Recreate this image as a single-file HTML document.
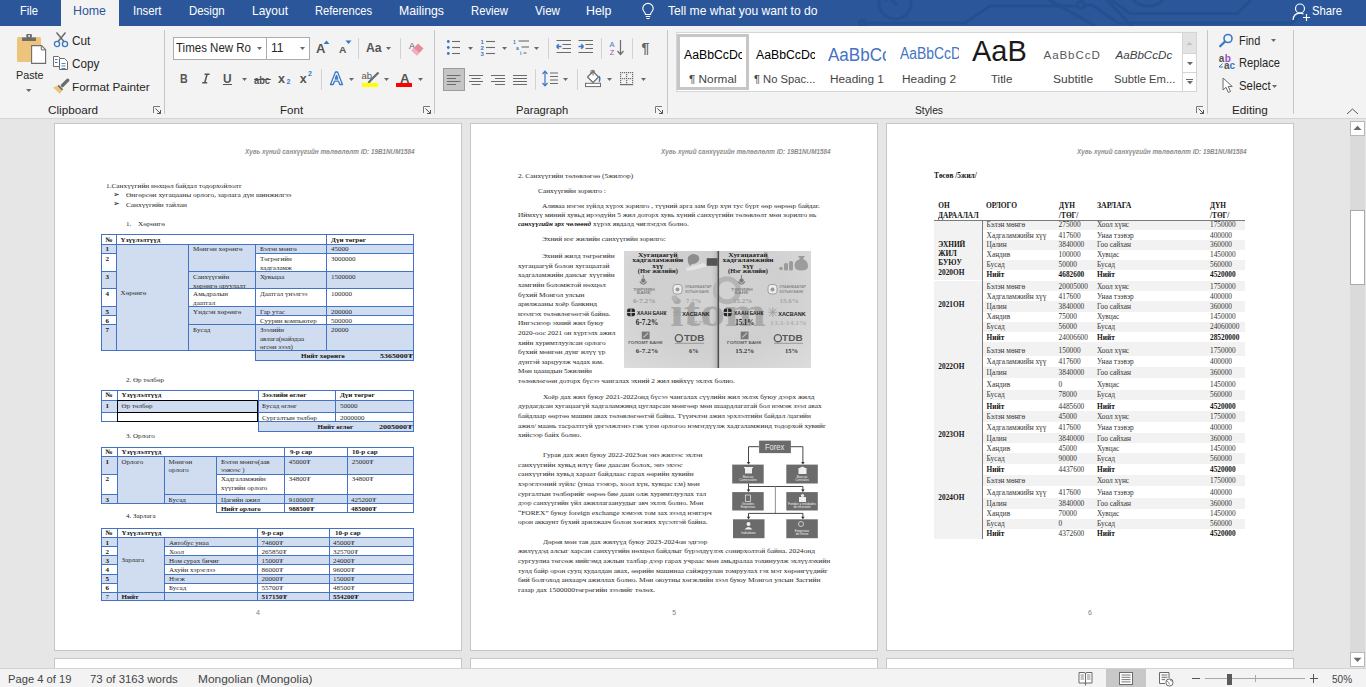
<!DOCTYPE html><html><head><meta charset="utf-8"><title>Word</title><style>
html,body{margin:0;padding:0}
body{width:1366px;height:687px;overflow:hidden;position:relative;background:#e6e6e6;font-family:'Liberation Sans',sans-serif}
.t{position:absolute;line-height:0;white-space:nowrap}
.b{position:absolute;box-sizing:border-box}
svg{position:absolute;overflow:visible}
</style></head><body>
<div class="b" style="left:54px;top:123px;width:408px;height:528px;background:#fff;border:1px solid #c6c6c6"></div>
<div class="b" style="left:54px;top:658px;width:408px;height:42px;background:#fff;border:1px solid #c6c6c6"></div>
<div class="b" style="left:470px;top:123px;width:408px;height:528px;background:#fff;border:1px solid #c6c6c6"></div>
<div class="b" style="left:470px;top:658px;width:408px;height:42px;background:#fff;border:1px solid #c6c6c6"></div>
<div class="b" style="left:886px;top:123px;width:408px;height:528px;background:#fff;border:1px solid #c6c6c6"></div>
<div class="b" style="left:886px;top:658px;width:408px;height:42px;background:#fff;border:1px solid #c6c6c6"></div>
<div class="t" style="left:244.50px;top:151.71px;font-size:6.6px;font-family:'Liberation Sans',sans-serif;color:#8c8c8c;font-style:italic;font-weight:bold;transform:scaleX(0.9597);transform-origin:0 0;">Хувь хүний санхүүгийн төлөвлөлт  ID: 19B1NUM1584</div>
<div class="t" style="left:106.00px;top:185.94px;font-size:7.0px;font-family:'Liberation Serif',serif;color:#282828;transform:scaleX(1.0454);transform-origin:0 0;">1.Санхүүгийн нөхцөл байдал тодорхойлолт</div>
<div class="t" style="left:113.00px;top:194.53px;font-size:8px;font-family:'Liberation Sans',sans-serif;color:#111;">➢</div>
<div class="t" style="left:125.70px;top:195.34px;font-size:7.0px;font-family:'Liberation Serif',serif;color:#282828;transform:scaleX(1.0525);transform-origin:0 0;">Өнгөрсөн хугацааны орлого, зарлага дүн шинжилгээ</div>
<div class="t" style="left:113.00px;top:204.13px;font-size:8px;font-family:'Liberation Sans',sans-serif;color:#111;">➢</div>
<div class="t" style="left:125.70px;top:204.94px;font-size:7.0px;font-family:'Liberation Serif',serif;color:#282828;transform:scaleX(1.0441);transform-origin:0 0;">Санхүүгийн тайлан</div>
<div class="t" style="left:126.00px;top:224.34px;font-size:7.0px;font-family:'Liberation Serif',serif;color:#282828;">1.</div>
<div class="t" style="left:138.20px;top:224.34px;font-size:7.0px;font-family:'Liberation Serif',serif;color:#282828;transform:scaleX(1.0433);transform-origin:0 0;">Хөрөнгө</div>
<div class="b" style="left:101px;top:234px;width:16px;height:11px;background:#ffffff"></div>
<div class="b" style="left:116px;top:234px;width:211px;height:11px;background:#ffffff"></div>
<div class="b" style="left:326px;top:234px;width:88px;height:11px;background:#ffffff"></div>
<div class="b" style="left:101px;top:244px;width:16px;height:10px;background:#d0dcf0"></div>
<div class="b" style="left:116px;top:244px;width:73px;height:107px;background:#d0dcf0"></div>
<div class="b" style="left:188px;top:244px;width:68px;height:28px;background:#d0dcf0"></div>
<div class="b" style="left:255px;top:244px;width:72px;height:10px;background:#d0dcf0"></div>
<div class="b" style="left:326px;top:244px;width:88px;height:10px;background:#d0dcf0"></div>
<div class="b" style="left:101px;top:253px;width:16px;height:19px;background:#ffffff"></div>
<div class="b" style="left:255px;top:253px;width:72px;height:19px;background:#ffffff"></div>
<div class="b" style="left:326px;top:253px;width:88px;height:19px;background:#ffffff"></div>
<div class="b" style="left:101px;top:271px;width:16px;height:18px;background:#d0dcf0"></div>
<div class="b" style="left:188px;top:271px;width:68px;height:18px;background:#d0dcf0"></div>
<div class="b" style="left:255px;top:271px;width:72px;height:18px;background:#d0dcf0"></div>
<div class="b" style="left:326px;top:271px;width:88px;height:18px;background:#d0dcf0"></div>
<div class="b" style="left:101px;top:288px;width:16px;height:19px;background:#ffffff"></div>
<div class="b" style="left:188px;top:288px;width:68px;height:19px;background:#ffffff"></div>
<div class="b" style="left:255px;top:288px;width:72px;height:19px;background:#ffffff"></div>
<div class="b" style="left:326px;top:288px;width:88px;height:19px;background:#ffffff"></div>
<div class="b" style="left:101px;top:306px;width:16px;height:10px;background:#d0dcf0"></div>
<div class="b" style="left:188px;top:306px;width:68px;height:19px;background:#d0dcf0"></div>
<div class="b" style="left:255px;top:306px;width:72px;height:10px;background:#d0dcf0"></div>
<div class="b" style="left:326px;top:306px;width:88px;height:10px;background:#d0dcf0"></div>
<div class="b" style="left:101px;top:315px;width:16px;height:10px;background:#ffffff"></div>
<div class="b" style="left:255px;top:315px;width:72px;height:10px;background:#ffffff"></div>
<div class="b" style="left:326px;top:315px;width:88px;height:10px;background:#ffffff"></div>
<div class="b" style="left:101px;top:324px;width:16px;height:27px;background:#d0dcf0"></div>
<div class="b" style="left:188px;top:324px;width:68px;height:27px;background:#d0dcf0"></div>
<div class="b" style="left:255px;top:324px;width:72px;height:27px;background:#d0dcf0"></div>
<div class="b" style="left:326px;top:324px;width:88px;height:27px;background:#d0dcf0"></div>
<div class="b" style="left:255px;top:350px;width:159px;height:11px;background:#d0dcf0"></div>
<div class="b" style="left:101px;top:234px;width:16px;height:11px;border:1px solid #4472c4"></div>
<div class="b" style="left:116px;top:234px;width:211px;height:11px;border:1px solid #4472c4"></div>
<div class="b" style="left:326px;top:234px;width:88px;height:11px;border:1px solid #4472c4"></div>
<div class="b" style="left:101px;top:244px;width:16px;height:10px;border:1px solid #4472c4"></div>
<div class="b" style="left:116px;top:244px;width:73px;height:107px;border:1px solid #4472c4"></div>
<div class="b" style="left:188px;top:244px;width:68px;height:28px;border:1px solid #4472c4"></div>
<div class="b" style="left:255px;top:244px;width:72px;height:10px;border:1px solid #4472c4"></div>
<div class="b" style="left:326px;top:244px;width:88px;height:10px;border:1px solid #4472c4"></div>
<div class="b" style="left:101px;top:253px;width:16px;height:19px;border:1px solid #4472c4"></div>
<div class="b" style="left:255px;top:253px;width:72px;height:19px;border:1px solid #4472c4"></div>
<div class="b" style="left:326px;top:253px;width:88px;height:19px;border:1px solid #4472c4"></div>
<div class="b" style="left:101px;top:271px;width:16px;height:18px;border:1px solid #4472c4"></div>
<div class="b" style="left:188px;top:271px;width:68px;height:18px;border:1px solid #4472c4"></div>
<div class="b" style="left:255px;top:271px;width:72px;height:18px;border:1px solid #4472c4"></div>
<div class="b" style="left:326px;top:271px;width:88px;height:18px;border:1px solid #4472c4"></div>
<div class="b" style="left:101px;top:288px;width:16px;height:19px;border:1px solid #4472c4"></div>
<div class="b" style="left:188px;top:288px;width:68px;height:19px;border:1px solid #4472c4"></div>
<div class="b" style="left:255px;top:288px;width:72px;height:19px;border:1px solid #4472c4"></div>
<div class="b" style="left:326px;top:288px;width:88px;height:19px;border:1px solid #4472c4"></div>
<div class="b" style="left:101px;top:306px;width:16px;height:10px;border:1px solid #4472c4"></div>
<div class="b" style="left:188px;top:306px;width:68px;height:19px;border:1px solid #4472c4"></div>
<div class="b" style="left:255px;top:306px;width:72px;height:10px;border:1px solid #4472c4"></div>
<div class="b" style="left:326px;top:306px;width:88px;height:10px;border:1px solid #4472c4"></div>
<div class="b" style="left:101px;top:315px;width:16px;height:10px;border:1px solid #4472c4"></div>
<div class="b" style="left:255px;top:315px;width:72px;height:10px;border:1px solid #4472c4"></div>
<div class="b" style="left:326px;top:315px;width:88px;height:10px;border:1px solid #4472c4"></div>
<div class="b" style="left:101px;top:324px;width:16px;height:27px;border:1px solid #4472c4"></div>
<div class="b" style="left:188px;top:324px;width:68px;height:27px;border:1px solid #4472c4"></div>
<div class="b" style="left:255px;top:324px;width:72px;height:27px;border:1px solid #4472c4"></div>
<div class="b" style="left:326px;top:324px;width:88px;height:27px;border:1px solid #4472c4"></div>
<div class="b" style="left:255px;top:350px;width:159px;height:11px;border:1px solid #4472c4"></div>
<div class="t" style="left:105.60px;top:239.94px;font-size:7.0px;font-family:'Liberation Serif',serif;color:#141414;font-weight:bold;">№</div>
<div class="t" style="left:120.60px;top:239.94px;font-size:7.0px;font-family:'Liberation Serif',serif;color:#141414;font-weight:bold;">Үзүүлэлтүүд</div>
<div class="t" style="left:331.10px;top:239.94px;font-size:7.0px;font-family:'Liberation Serif',serif;color:#141414;font-weight:bold;">Дүн төгрөг</div>
<div class="t" style="left:105.60px;top:249.44px;font-size:7.0px;font-family:'Liberation Serif',serif;color:#141414;font-weight:bold;">1</div>
<div class="t" style="left:120.60px;top:292.79px;font-size:7.0px;font-family:'Liberation Serif',serif;color:#282828;">Хөрөнгө</div>
<div class="t" style="left:193.10px;top:249.44px;font-size:7.0px;font-family:'Liberation Serif',serif;color:#282828;">Мөнгөн хөрөнгө</div>
<div class="t" style="left:259.90px;top:249.44px;font-size:7.0px;font-family:'Liberation Serif',serif;color:#282828;">Бэлэн мөнгө</div>
<div class="t" style="left:331.10px;top:249.44px;font-size:7.0px;font-family:'Liberation Serif',serif;color:#282828;">45000</div>
<div class="t" style="left:105.60px;top:259.24px;font-size:7.0px;font-family:'Liberation Serif',serif;color:#141414;font-weight:bold;">2</div>
<div class="t" style="left:259.90px;top:259.24px;font-size:7.0px;font-family:'Liberation Serif',serif;color:#282828;">Төгрөгийн</div>
<div class="t" style="left:259.90px;top:267.64px;font-size:7.0px;font-family:'Liberation Serif',serif;color:#282828;">хадгаламж</div>
<div class="t" style="left:331.10px;top:259.24px;font-size:7.0px;font-family:'Liberation Serif',serif;color:#282828;">3000000</div>
<div class="t" style="left:105.60px;top:277.14px;font-size:7.0px;font-family:'Liberation Serif',serif;color:#141414;font-weight:bold;">3</div>
<div class="t" style="left:193.10px;top:277.14px;font-size:7.0px;font-family:'Liberation Serif',serif;color:#282828;">Санхүүгийн</div>
<div class="t" style="left:193.10px;top:285.54px;font-size:7.0px;font-family:'Liberation Serif',serif;color:#282828;">хөрөнгө оруулалт</div>
<div class="t" style="left:259.90px;top:277.14px;font-size:7.0px;font-family:'Liberation Serif',serif;color:#282828;">Хувьцаа</div>
<div class="t" style="left:331.10px;top:277.14px;font-size:7.0px;font-family:'Liberation Serif',serif;color:#282828;">1500000</div>
<div class="t" style="left:105.60px;top:294.24px;font-size:7.0px;font-family:'Liberation Serif',serif;color:#141414;font-weight:bold;">4</div>
<div class="t" style="left:193.10px;top:294.24px;font-size:7.0px;font-family:'Liberation Serif',serif;color:#282828;">Амьдралын</div>
<div class="t" style="left:193.10px;top:302.64px;font-size:7.0px;font-family:'Liberation Serif',serif;color:#282828;">даатгал</div>
<div class="t" style="left:259.90px;top:294.24px;font-size:7.0px;font-family:'Liberation Serif',serif;color:#282828;">Даатгал үнэлгээ</div>
<div class="t" style="left:331.10px;top:294.24px;font-size:7.0px;font-family:'Liberation Serif',serif;color:#282828;">100000</div>
<div class="t" style="left:105.60px;top:312.14px;font-size:7.0px;font-family:'Liberation Serif',serif;color:#141414;font-weight:bold;">5</div>
<div class="t" style="left:193.10px;top:312.14px;font-size:7.0px;font-family:'Liberation Serif',serif;color:#282828;">Үндсэн хөрөнгө</div>
<div class="t" style="left:259.90px;top:312.14px;font-size:7.0px;font-family:'Liberation Serif',serif;color:#282828;">Гар утас</div>
<div class="t" style="left:331.10px;top:312.14px;font-size:7.0px;font-family:'Liberation Serif',serif;color:#282828;">200000</div>
<div class="t" style="left:105.60px;top:321.14px;font-size:7.0px;font-family:'Liberation Serif',serif;color:#141414;font-weight:bold;">6</div>
<div class="t" style="left:259.90px;top:321.14px;font-size:7.0px;font-family:'Liberation Serif',serif;color:#282828;">Суурин компьютер</div>
<div class="t" style="left:331.10px;top:321.14px;font-size:7.0px;font-family:'Liberation Serif',serif;color:#282828;">500000</div>
<div class="t" style="left:105.60px;top:330.24px;font-size:7.0px;font-family:'Liberation Serif',serif;color:#141414;font-weight:bold;">7</div>
<div class="t" style="left:193.10px;top:330.24px;font-size:7.0px;font-family:'Liberation Serif',serif;color:#282828;">Бусад</div>
<div class="t" style="left:259.90px;top:330.24px;font-size:7.0px;font-family:'Liberation Serif',serif;color:#282828;">Зээлийн</div>
<div class="t" style="left:259.90px;top:338.64px;font-size:7.0px;font-family:'Liberation Serif',serif;color:#282828;">авлага(найздаа</div>
<div class="t" style="left:259.90px;top:347.04px;font-size:7.0px;font-family:'Liberation Serif',serif;color:#282828;">өгсөн зээл)</div>
<div class="t" style="left:331.10px;top:330.24px;font-size:7.0px;font-family:'Liberation Serif',serif;color:#282828;">20000</div>
<div class="t" style="left:301.00px;top:355.94px;font-size:7.0px;font-family:'Liberation Serif',serif;color:#141414;font-weight:bold;">Нийт хөрөнгө</div>
<div class="t" style="left:379.50px;top:355.94px;font-size:7.0px;font-family:'Liberation Serif',serif;color:#141414;font-weight:bold;transform:scaleX(1.1312);transform-origin:0 0;">5365000₮</div>
<div class="t" style="left:126.00px;top:380.34px;font-size:7.0px;font-family:'Liberation Serif',serif;color:#282828;">2. Өр төлбөр</div>
<div class="b" style="left:101px;top:390px;width:17px;height:11px;background:#ffffff"></div>
<div class="b" style="left:117px;top:390px;width:142px;height:11px;background:#ffffff"></div>
<div class="b" style="left:258px;top:390px;width:78px;height:11px;background:#ffffff"></div>
<div class="b" style="left:335px;top:390px;width:79px;height:11px;background:#ffffff"></div>
<div class="b" style="left:101px;top:400px;width:17px;height:13px;background:#d0dcf0"></div>
<div class="b" style="left:117px;top:400px;width:142px;height:13px;background:#d0dcf0"></div>
<div class="b" style="left:258px;top:400px;width:78px;height:13px;background:#d0dcf0"></div>
<div class="b" style="left:335px;top:400px;width:79px;height:13px;background:#d0dcf0"></div>
<div class="b" style="left:101px;top:412px;width:17px;height:10px;background:#ffffff"></div>
<div class="b" style="left:117px;top:412px;width:142px;height:10px;background:#ffffff"></div>
<div class="b" style="left:258px;top:412px;width:78px;height:10px;background:#ffffff"></div>
<div class="b" style="left:335px;top:412px;width:79px;height:10px;background:#ffffff"></div>
<div class="b" style="left:258px;top:421px;width:156px;height:11px;background:#d0dcf0"></div>
<div class="b" style="left:101px;top:390px;width:17px;height:11px;border:1px solid #4472c4"></div>
<div class="b" style="left:117px;top:390px;width:142px;height:11px;border:1px solid #4472c4"></div>
<div class="b" style="left:258px;top:390px;width:78px;height:11px;border:1px solid #4472c4"></div>
<div class="b" style="left:335px;top:390px;width:79px;height:11px;border:1px solid #4472c4"></div>
<div class="b" style="left:101px;top:400px;width:17px;height:13px;border:1px solid #4472c4"></div>
<div class="b" style="left:117px;top:400px;width:142px;height:13px;border:1px solid #4472c4"></div>
<div class="b" style="left:258px;top:400px;width:78px;height:13px;border:1px solid #4472c4"></div>
<div class="b" style="left:335px;top:400px;width:79px;height:13px;border:1px solid #4472c4"></div>
<div class="b" style="left:101px;top:412px;width:17px;height:10px;border:1px solid #4472c4"></div>
<div class="b" style="left:117px;top:412px;width:142px;height:10px;border:1px solid #4472c4"></div>
<div class="b" style="left:258px;top:412px;width:78px;height:10px;border:1px solid #4472c4"></div>
<div class="b" style="left:335px;top:412px;width:79px;height:10px;border:1px solid #4472c4"></div>
<div class="b" style="left:258px;top:421px;width:156px;height:11px;border:1px solid #4472c4"></div>
<div class="t" style="left:105.60px;top:395.34px;font-size:7.0px;font-family:'Liberation Serif',serif;color:#141414;font-weight:bold;">№</div>
<div class="t" style="left:121.60px;top:395.34px;font-size:7.0px;font-family:'Liberation Serif',serif;color:#141414;font-weight:bold;">Үзүүлэлтүүд</div>
<div class="t" style="left:262.10px;top:395.34px;font-size:7.0px;font-family:'Liberation Serif',serif;color:#141414;font-weight:bold;">Зээлийн өглөг</div>
<div class="t" style="left:339.90px;top:395.34px;font-size:7.0px;font-family:'Liberation Serif',serif;color:#141414;font-weight:bold;">Дүн төгрөг</div>
<div class="t" style="left:105.60px;top:406.34px;font-size:7.0px;font-family:'Liberation Serif',serif;color:#141414;font-weight:bold;">1</div>
<div class="t" style="left:121.60px;top:406.34px;font-size:7.0px;font-family:'Liberation Serif',serif;color:#282828;">Өр төлбөр</div>
<div class="t" style="left:262.10px;top:406.34px;font-size:7.0px;font-family:'Liberation Serif',serif;color:#282828;">Бусад өглөг</div>
<div class="t" style="left:339.90px;top:406.34px;font-size:7.0px;font-family:'Liberation Serif',serif;color:#282828;">50000</div>
<div class="t" style="left:262.10px;top:418.24px;font-size:7.0px;font-family:'Liberation Serif',serif;color:#282828;">Сургалтын төлбөр</div>
<div class="t" style="left:339.90px;top:418.24px;font-size:7.0px;font-family:'Liberation Serif',serif;color:#282828;">2000000</div>
<div class="b" style="left:117px;top:400px;width:141px;height:13px;border:1px solid #000"></div>
<div class="b" style="left:117px;top:412px;width:141px;height:10px;border:1px solid #000"></div>
<div class="t" style="left:317.60px;top:426.94px;font-size:7.0px;font-family:'Liberation Serif',serif;color:#141414;font-weight:bold;">Нийт өглөг</div>
<div class="t" style="left:379.00px;top:426.94px;font-size:7.0px;font-family:'Liberation Serif',serif;color:#141414;font-weight:bold;transform:scaleX(1.1484);transform-origin:0 0;">2005000₮</div>
<div class="t" style="left:126.00px;top:435.84px;font-size:7.0px;font-family:'Liberation Serif',serif;color:#282828;">3. Орлого</div>
<div class="b" style="left:101px;top:447px;width:17px;height:10px;background:#ffffff"></div>
<div class="b" style="left:117px;top:447px;width:168px;height:10px;background:#ffffff"></div>
<div class="b" style="left:284px;top:447px;width:64px;height:10px;background:#ffffff"></div>
<div class="b" style="left:347px;top:447px;width:67px;height:10px;background:#ffffff"></div>
<div class="b" style="left:101px;top:456px;width:17px;height:19px;background:#d0dcf0"></div>
<div class="b" style="left:117px;top:456px;width:48px;height:48px;background:#d0dcf0"></div>
<div class="b" style="left:164px;top:456px;width:53px;height:39px;background:#d0dcf0"></div>
<div class="b" style="left:216px;top:456px;width:69px;height:19px;background:#d0dcf0"></div>
<div class="b" style="left:284px;top:456px;width:64px;height:19px;background:#d0dcf0"></div>
<div class="b" style="left:347px;top:456px;width:67px;height:19px;background:#d0dcf0"></div>
<div class="b" style="left:101px;top:474px;width:17px;height:21px;background:#ffffff"></div>
<div class="b" style="left:216px;top:474px;width:69px;height:21px;background:#ffffff"></div>
<div class="b" style="left:284px;top:474px;width:64px;height:21px;background:#ffffff"></div>
<div class="b" style="left:347px;top:474px;width:67px;height:21px;background:#ffffff"></div>
<div class="b" style="left:101px;top:494px;width:17px;height:10px;background:#d0dcf0"></div>
<div class="b" style="left:164px;top:494px;width:53px;height:10px;background:#d0dcf0"></div>
<div class="b" style="left:216px;top:494px;width:69px;height:10px;background:#d0dcf0"></div>
<div class="b" style="left:284px;top:494px;width:64px;height:10px;background:#d0dcf0"></div>
<div class="b" style="left:347px;top:494px;width:67px;height:10px;background:#d0dcf0"></div>
<div class="b" style="left:216px;top:503px;width:69px;height:10px;background:#ffffff"></div>
<div class="b" style="left:284px;top:503px;width:64px;height:10px;background:#ffffff"></div>
<div class="b" style="left:347px;top:503px;width:67px;height:10px;background:#ffffff"></div>
<div class="b" style="left:101px;top:447px;width:17px;height:10px;border:1px solid #4472c4"></div>
<div class="b" style="left:117px;top:447px;width:168px;height:10px;border:1px solid #4472c4"></div>
<div class="b" style="left:284px;top:447px;width:64px;height:10px;border:1px solid #4472c4"></div>
<div class="b" style="left:347px;top:447px;width:67px;height:10px;border:1px solid #4472c4"></div>
<div class="b" style="left:101px;top:456px;width:17px;height:19px;border:1px solid #4472c4"></div>
<div class="b" style="left:117px;top:456px;width:48px;height:48px;border:1px solid #4472c4"></div>
<div class="b" style="left:164px;top:456px;width:53px;height:39px;border:1px solid #4472c4"></div>
<div class="b" style="left:216px;top:456px;width:69px;height:19px;border:1px solid #4472c4"></div>
<div class="b" style="left:284px;top:456px;width:64px;height:19px;border:1px solid #4472c4"></div>
<div class="b" style="left:347px;top:456px;width:67px;height:19px;border:1px solid #4472c4"></div>
<div class="b" style="left:101px;top:474px;width:17px;height:21px;border:1px solid #4472c4"></div>
<div class="b" style="left:216px;top:474px;width:69px;height:21px;border:1px solid #4472c4"></div>
<div class="b" style="left:284px;top:474px;width:64px;height:21px;border:1px solid #4472c4"></div>
<div class="b" style="left:347px;top:474px;width:67px;height:21px;border:1px solid #4472c4"></div>
<div class="b" style="left:101px;top:494px;width:17px;height:10px;border:1px solid #4472c4"></div>
<div class="b" style="left:164px;top:494px;width:53px;height:10px;border:1px solid #4472c4"></div>
<div class="b" style="left:216px;top:494px;width:69px;height:10px;border:1px solid #4472c4"></div>
<div class="b" style="left:284px;top:494px;width:64px;height:10px;border:1px solid #4472c4"></div>
<div class="b" style="left:347px;top:494px;width:67px;height:10px;border:1px solid #4472c4"></div>
<div class="b" style="left:216px;top:503px;width:69px;height:10px;border:1px solid #4472c4"></div>
<div class="b" style="left:284px;top:503px;width:64px;height:10px;border:1px solid #4472c4"></div>
<div class="b" style="left:347px;top:503px;width:67px;height:10px;border:1px solid #4472c4"></div>
<div class="t" style="left:105.60px;top:452.24px;font-size:7.0px;font-family:'Liberation Serif',serif;color:#141414;font-weight:bold;">№</div>
<div class="t" style="left:121.60px;top:452.24px;font-size:7.0px;font-family:'Liberation Serif',serif;color:#141414;font-weight:bold;">Үзүүлэлтүүд</div>
<div class="t" style="left:290.00px;top:452.24px;font-size:7.0px;font-family:'Liberation Serif',serif;color:#141414;font-weight:bold;">9-р сар</div>
<div class="t" style="left:352.00px;top:452.24px;font-size:7.0px;font-family:'Liberation Serif',serif;color:#141414;font-weight:bold;">10-р сар</div>
<div class="t" style="left:105.60px;top:461.74px;font-size:7.0px;font-family:'Liberation Serif',serif;color:#141414;font-weight:bold;">1</div>
<div class="t" style="left:121.60px;top:461.74px;font-size:7.0px;font-family:'Liberation Serif',serif;color:#282828;">Орлого</div>
<div class="t" style="left:168.60px;top:461.74px;font-size:7.0px;font-family:'Liberation Serif',serif;color:#282828;">Мөнгөн</div>
<div class="t" style="left:168.60px;top:470.14px;font-size:7.0px;font-family:'Liberation Serif',serif;color:#282828;">орлого</div>
<div class="t" style="left:220.90px;top:461.74px;font-size:7.0px;font-family:'Liberation Serif',serif;color:#282828;">Бэлэн мөнгө(аав</div>
<div class="t" style="left:220.90px;top:470.14px;font-size:7.0px;font-family:'Liberation Serif',serif;color:#282828;">ээжээс )</div>
<div class="t" style="left:288.80px;top:461.74px;font-size:7.0px;font-family:'Liberation Serif',serif;color:#282828;">45000₮</div>
<div class="t" style="left:351.80px;top:461.74px;font-size:7.0px;font-family:'Liberation Serif',serif;color:#282828;">25000₮</div>
<div class="t" style="left:105.60px;top:479.14px;font-size:7.0px;font-family:'Liberation Serif',serif;color:#141414;font-weight:bold;">2</div>
<div class="t" style="left:220.90px;top:479.14px;font-size:7.0px;font-family:'Liberation Serif',serif;color:#282828;">Хадгаламжийн</div>
<div class="t" style="left:220.90px;top:487.54px;font-size:7.0px;font-family:'Liberation Serif',serif;color:#282828;">хүүгийн орлого</div>
<div class="t" style="left:288.80px;top:479.14px;font-size:7.0px;font-family:'Liberation Serif',serif;color:#282828;">34800₮</div>
<div class="t" style="left:351.80px;top:479.14px;font-size:7.0px;font-family:'Liberation Serif',serif;color:#282828;">34800₮</div>
<div class="t" style="left:105.60px;top:499.84px;font-size:7.0px;font-family:'Liberation Serif',serif;color:#141414;font-weight:bold;">3</div>
<div class="t" style="left:168.60px;top:499.84px;font-size:7.0px;font-family:'Liberation Serif',serif;color:#282828;">Бусад</div>
<div class="t" style="left:220.90px;top:499.84px;font-size:7.0px;font-family:'Liberation Serif',serif;color:#282828;">Цагийн ажил</div>
<div class="t" style="left:288.80px;top:499.84px;font-size:7.0px;font-family:'Liberation Serif',serif;color:#282828;">910000₮</div>
<div class="t" style="left:351.00px;top:499.84px;font-size:7.0px;font-family:'Liberation Serif',serif;color:#282828;">425200₮</div>
<div class="t" style="left:220.90px;top:508.84px;font-size:7.0px;font-family:'Liberation Serif',serif;color:#141414;font-weight:bold;">Нийт орлого</div>
<div class="t" style="left:288.80px;top:508.84px;font-size:7.0px;font-family:'Liberation Serif',serif;color:#141414;font-weight:bold;">988500₮</div>
<div class="t" style="left:351.00px;top:508.84px;font-size:7.0px;font-family:'Liberation Serif',serif;color:#141414;font-weight:bold;">485000₮</div>
<div class="t" style="left:126.00px;top:516.34px;font-size:7.0px;font-family:'Liberation Serif',serif;color:#282828;">4. Зарлага</div>
<div class="b" style="left:101px;top:528px;width:17px;height:10px;background:#ffffff"></div>
<div class="b" style="left:117px;top:528px;width:141px;height:10px;background:#ffffff"></div>
<div class="b" style="left:257px;top:528px;width:73px;height:10px;background:#ffffff"></div>
<div class="b" style="left:329px;top:528px;width:85px;height:10px;background:#ffffff"></div>
<div class="b" style="left:101px;top:537px;width:17px;height:10px;background:#d0dcf0"></div>
<div class="b" style="left:164px;top:537px;width:94px;height:10px;background:#d0dcf0"></div>
<div class="b" style="left:257px;top:537px;width:73px;height:10px;background:#d0dcf0"></div>
<div class="b" style="left:329px;top:537px;width:85px;height:10px;background:#d0dcf0"></div>
<div class="b" style="left:101px;top:546px;width:17px;height:10px;background:#ffffff"></div>
<div class="b" style="left:164px;top:546px;width:94px;height:10px;background:#ffffff"></div>
<div class="b" style="left:257px;top:546px;width:73px;height:10px;background:#ffffff"></div>
<div class="b" style="left:329px;top:546px;width:85px;height:10px;background:#ffffff"></div>
<div class="b" style="left:101px;top:555px;width:17px;height:10px;background:#d0dcf0"></div>
<div class="b" style="left:164px;top:555px;width:94px;height:10px;background:#d0dcf0"></div>
<div class="b" style="left:257px;top:555px;width:73px;height:10px;background:#d0dcf0"></div>
<div class="b" style="left:329px;top:555px;width:85px;height:10px;background:#d0dcf0"></div>
<div class="b" style="left:101px;top:564px;width:17px;height:11px;background:#ffffff"></div>
<div class="b" style="left:164px;top:564px;width:94px;height:11px;background:#ffffff"></div>
<div class="b" style="left:257px;top:564px;width:73px;height:11px;background:#ffffff"></div>
<div class="b" style="left:329px;top:564px;width:85px;height:11px;background:#ffffff"></div>
<div class="b" style="left:101px;top:574px;width:17px;height:10px;background:#d0dcf0"></div>
<div class="b" style="left:164px;top:574px;width:94px;height:10px;background:#d0dcf0"></div>
<div class="b" style="left:257px;top:574px;width:73px;height:10px;background:#d0dcf0"></div>
<div class="b" style="left:329px;top:574px;width:85px;height:10px;background:#d0dcf0"></div>
<div class="b" style="left:101px;top:583px;width:17px;height:10px;background:#ffffff"></div>
<div class="b" style="left:164px;top:583px;width:94px;height:10px;background:#ffffff"></div>
<div class="b" style="left:257px;top:583px;width:73px;height:10px;background:#ffffff"></div>
<div class="b" style="left:329px;top:583px;width:85px;height:10px;background:#ffffff"></div>
<div class="b" style="left:117px;top:537px;width:48px;height:56px;background:#d0dcf0"></div>
<div class="b" style="left:101px;top:592px;width:17px;height:9px;background:#d0dcf0"></div>
<div class="b" style="left:117px;top:592px;width:48px;height:9px;background:#d0dcf0"></div>
<div class="b" style="left:164px;top:592px;width:94px;height:9px;background:#d0dcf0"></div>
<div class="b" style="left:257px;top:592px;width:73px;height:9px;background:#d0dcf0"></div>
<div class="b" style="left:329px;top:592px;width:85px;height:9px;background:#d0dcf0"></div>
<div class="b" style="left:101px;top:528px;width:17px;height:10px;border:1px solid #4472c4"></div>
<div class="b" style="left:117px;top:528px;width:141px;height:10px;border:1px solid #4472c4"></div>
<div class="b" style="left:257px;top:528px;width:73px;height:10px;border:1px solid #4472c4"></div>
<div class="b" style="left:329px;top:528px;width:85px;height:10px;border:1px solid #4472c4"></div>
<div class="b" style="left:101px;top:537px;width:17px;height:10px;border:1px solid #4472c4"></div>
<div class="b" style="left:164px;top:537px;width:94px;height:10px;border:1px solid #4472c4"></div>
<div class="b" style="left:257px;top:537px;width:73px;height:10px;border:1px solid #4472c4"></div>
<div class="b" style="left:329px;top:537px;width:85px;height:10px;border:1px solid #4472c4"></div>
<div class="b" style="left:101px;top:546px;width:17px;height:10px;border:1px solid #4472c4"></div>
<div class="b" style="left:164px;top:546px;width:94px;height:10px;border:1px solid #4472c4"></div>
<div class="b" style="left:257px;top:546px;width:73px;height:10px;border:1px solid #4472c4"></div>
<div class="b" style="left:329px;top:546px;width:85px;height:10px;border:1px solid #4472c4"></div>
<div class="b" style="left:101px;top:555px;width:17px;height:10px;border:1px solid #4472c4"></div>
<div class="b" style="left:164px;top:555px;width:94px;height:10px;border:1px solid #4472c4"></div>
<div class="b" style="left:257px;top:555px;width:73px;height:10px;border:1px solid #4472c4"></div>
<div class="b" style="left:329px;top:555px;width:85px;height:10px;border:1px solid #4472c4"></div>
<div class="b" style="left:101px;top:564px;width:17px;height:11px;border:1px solid #4472c4"></div>
<div class="b" style="left:164px;top:564px;width:94px;height:11px;border:1px solid #4472c4"></div>
<div class="b" style="left:257px;top:564px;width:73px;height:11px;border:1px solid #4472c4"></div>
<div class="b" style="left:329px;top:564px;width:85px;height:11px;border:1px solid #4472c4"></div>
<div class="b" style="left:101px;top:574px;width:17px;height:10px;border:1px solid #4472c4"></div>
<div class="b" style="left:164px;top:574px;width:94px;height:10px;border:1px solid #4472c4"></div>
<div class="b" style="left:257px;top:574px;width:73px;height:10px;border:1px solid #4472c4"></div>
<div class="b" style="left:329px;top:574px;width:85px;height:10px;border:1px solid #4472c4"></div>
<div class="b" style="left:101px;top:583px;width:17px;height:10px;border:1px solid #4472c4"></div>
<div class="b" style="left:164px;top:583px;width:94px;height:10px;border:1px solid #4472c4"></div>
<div class="b" style="left:257px;top:583px;width:73px;height:10px;border:1px solid #4472c4"></div>
<div class="b" style="left:329px;top:583px;width:85px;height:10px;border:1px solid #4472c4"></div>
<div class="b" style="left:117px;top:537px;width:48px;height:56px;border:1px solid #4472c4"></div>
<div class="b" style="left:101px;top:592px;width:17px;height:9px;border:1px solid #4472c4"></div>
<div class="b" style="left:117px;top:592px;width:48px;height:9px;border:1px solid #4472c4"></div>
<div class="b" style="left:164px;top:592px;width:94px;height:9px;border:1px solid #4472c4"></div>
<div class="b" style="left:257px;top:592px;width:73px;height:9px;border:1px solid #4472c4"></div>
<div class="b" style="left:329px;top:592px;width:85px;height:9px;border:1px solid #4472c4"></div>
<div class="t" style="left:105.60px;top:533.24px;font-size:7.0px;font-family:'Liberation Serif',serif;color:#141414;font-weight:bold;">№</div>
<div class="t" style="left:121.60px;top:533.24px;font-size:7.0px;font-family:'Liberation Serif',serif;color:#141414;font-weight:bold;">Үзүүлэлтүүд</div>
<div class="t" style="left:261.40px;top:533.24px;font-size:7.0px;font-family:'Liberation Serif',serif;color:#141414;font-weight:bold;">9-р сар</div>
<div class="t" style="left:335.00px;top:533.24px;font-size:7.0px;font-family:'Liberation Serif',serif;color:#141414;font-weight:bold;">10-р сар</div>
<div class="t" style="left:105.60px;top:542.74px;font-size:7.0px;font-family:'Liberation Serif',serif;color:#141414;font-weight:bold;">1</div>
<div class="t" style="left:169.00px;top:542.74px;font-size:7.0px;font-family:'Liberation Serif',serif;color:#282828;">Автобус унаа</div>
<div class="t" style="left:261.40px;top:542.74px;font-size:7.0px;font-family:'Liberation Serif',serif;color:#282828;">74600₮</div>
<div class="t" style="left:333.00px;top:542.74px;font-size:7.0px;font-family:'Liberation Serif',serif;color:#282828;">45000₮</div>
<div class="t" style="left:105.60px;top:551.84px;font-size:7.0px;font-family:'Liberation Serif',serif;color:#141414;font-weight:bold;">2</div>
<div class="t" style="left:169.00px;top:551.84px;font-size:7.0px;font-family:'Liberation Serif',serif;color:#282828;">Хоол</div>
<div class="t" style="left:261.40px;top:551.84px;font-size:7.0px;font-family:'Liberation Serif',serif;color:#282828;">265850₮</div>
<div class="t" style="left:333.00px;top:551.84px;font-size:7.0px;font-family:'Liberation Serif',serif;color:#282828;">325700₮</div>
<div class="t" style="left:105.60px;top:561.04px;font-size:7.0px;font-family:'Liberation Serif',serif;color:#141414;font-weight:bold;">3</div>
<div class="t" style="left:169.00px;top:561.04px;font-size:7.0px;font-family:'Liberation Serif',serif;color:#282828;">Ном сурах бичиг</div>
<div class="t" style="left:261.40px;top:561.04px;font-size:7.0px;font-family:'Liberation Serif',serif;color:#282828;">15000₮</div>
<div class="t" style="left:333.00px;top:561.04px;font-size:7.0px;font-family:'Liberation Serif',serif;color:#282828;">24000₮</div>
<div class="t" style="left:105.60px;top:570.14px;font-size:7.0px;font-family:'Liberation Serif',serif;color:#141414;font-weight:bold;">4</div>
<div class="t" style="left:169.00px;top:570.14px;font-size:7.0px;font-family:'Liberation Serif',serif;color:#282828;">Ахуйн хэрэглээ</div>
<div class="t" style="left:261.40px;top:570.14px;font-size:7.0px;font-family:'Liberation Serif',serif;color:#282828;">86000₮</div>
<div class="t" style="left:333.00px;top:570.14px;font-size:7.0px;font-family:'Liberation Serif',serif;color:#282828;">96000₮</div>
<div class="t" style="left:105.60px;top:579.14px;font-size:7.0px;font-family:'Liberation Serif',serif;color:#141414;font-weight:bold;">5</div>
<div class="t" style="left:169.00px;top:579.14px;font-size:7.0px;font-family:'Liberation Serif',serif;color:#282828;">Нэгж</div>
<div class="t" style="left:261.40px;top:579.14px;font-size:7.0px;font-family:'Liberation Serif',serif;color:#282828;">20000₮</div>
<div class="t" style="left:333.00px;top:579.14px;font-size:7.0px;font-family:'Liberation Serif',serif;color:#282828;">15000₮</div>
<div class="t" style="left:105.60px;top:588.24px;font-size:7.0px;font-family:'Liberation Serif',serif;color:#141414;font-weight:bold;">6</div>
<div class="t" style="left:169.00px;top:588.24px;font-size:7.0px;font-family:'Liberation Serif',serif;color:#282828;">Бусад</div>
<div class="t" style="left:261.40px;top:588.24px;font-size:7.0px;font-family:'Liberation Serif',serif;color:#282828;">55700₮</div>
<div class="t" style="left:333.00px;top:588.24px;font-size:7.0px;font-family:'Liberation Serif',serif;color:#282828;">48500₮</div>
<div class="t" style="left:121.60px;top:560.39px;font-size:7.0px;font-family:'Liberation Serif',serif;color:#282828;">Зарлага</div>
<div class="t" style="left:105.60px;top:597.44px;font-size:7.0px;font-family:'Liberation Serif',serif;color:#282828;">7</div>
<div class="t" style="left:121.60px;top:597.44px;font-size:7.0px;font-family:'Liberation Serif',serif;color:#141414;font-weight:bold;">Нийт</div>
<div class="t" style="left:261.40px;top:597.44px;font-size:7.0px;font-family:'Liberation Serif',serif;color:#141414;font-weight:bold;">517150₮</div>
<div class="t" style="left:333.00px;top:597.44px;font-size:7.0px;font-family:'Liberation Serif',serif;color:#141414;font-weight:bold;">554200₮</div>
<div class="t" style="left:256.00px;top:613.47px;font-size:7px;font-family:'Liberation Sans',sans-serif;color:#7f7f7f;">4</div>
<div class="t" style="left:660.50px;top:151.71px;font-size:6.6px;font-family:'Liberation Sans',sans-serif;color:#8c8c8c;font-style:italic;font-weight:bold;transform:scaleX(0.9597);transform-origin:0 0;">Хувь хүний санхүүгийн төлөвлөлт  ID: 19B1NUM1584</div>
<div class="t" style="left:518.00px;top:175.94px;font-size:7.0px;font-family:'Liberation Serif',serif;color:#282828;transform:scaleX(1.0471);transform-origin:0 0;">2. Санхүүгийн төлөвлөгөө (5жилээр)</div>
<div class="t" style="left:538.30px;top:190.64px;font-size:7.0px;font-family:'Liberation Serif',serif;color:#282828;transform:scaleX(1.0486);transform-origin:0 0;">Санхүүгийн зорилго :</div>
<div class="t" style="left:542.10px;top:205.64px;font-size:7.0px;font-family:'Liberation Serif',serif;color:#282828;transform:scaleX(1.0517);transform-origin:0 0;">Аливаа нэгэн зүйлд хүрэх зорилго , түүний арга зам бүр хүн тус бүрт өөр өөрөөр байдаг.</div>
<div class="t" style="left:518.00px;top:215.34px;font-size:7.0px;font-family:'Liberation Serif',serif;color:#282828;transform:scaleX(1.0487);transform-origin:0 0;">Иймхүү миний хувьд ирээдүйн 5 жил доторх хувь хүний санхүүгийн төлөвлөлт мөн зорилго нь</div>
<div class="t" style="left:518.00px;top:224.44px;font-size:7.0px;font-family:'Liberation Serif',serif;color:#141414;font-weight:bold;font-style:italic;transform:scaleX(0.9936);transform-origin:0 0;">санхүүгийн эрх чөлөөнд</div>
<div class="t" style="left:593.00px;top:224.44px;font-size:7.0px;font-family:'Liberation Serif',serif;color:#282828;transform:scaleX(1.0582);transform-origin:0 0;">хүрэх явдалд чиглэгдэх болно.</div>
<div class="t" style="left:542.10px;top:238.94px;font-size:7.0px;font-family:'Liberation Serif',serif;color:#282828;transform:scaleX(1.0390);transform-origin:0 0;">Эхний нэг жилийн санхүүгийн зорилго:</div>
<div class="t" style="left:541.60px;top:256.24px;font-size:7.0px;font-family:'Liberation Serif',serif;color:#282828;transform:scaleX(1.0515);transform-origin:0 0;">Эхний жилд төгрөгийн</div>
<div class="t" style="left:518.00px;top:265.84px;font-size:7.0px;font-family:'Liberation Serif',serif;color:#282828;transform:scaleX(1.0590);transform-origin:0 0;">хугацаагүй болон хугацаатай</div>
<div class="t" style="left:518.00px;top:275.44px;font-size:7.0px;font-family:'Liberation Serif',serif;color:#282828;transform:scaleX(1.0461);transform-origin:0 0;">хадгаламжийн дансыг хүүгийн</div>
<div class="t" style="left:518.00px;top:285.04px;font-size:7.0px;font-family:'Liberation Serif',serif;color:#282828;transform:scaleX(1.0509);transform-origin:0 0;">хамгийн боломжтой нөхцөл</div>
<div class="t" style="left:518.00px;top:294.64px;font-size:7.0px;font-family:'Liberation Serif',serif;color:#282828;transform:scaleX(1.0606);transform-origin:0 0;">бүхий Монгол улсын</div>
<div class="t" style="left:518.00px;top:304.24px;font-size:7.0px;font-family:'Liberation Serif',serif;color:#282828;transform:scaleX(1.0538);transform-origin:0 0;">арилжааны хоёр банкинд</div>
<div class="t" style="left:518.00px;top:313.84px;font-size:7.0px;font-family:'Liberation Serif',serif;color:#282828;transform:scaleX(1.0491);transform-origin:0 0;">нээлгэх төлөвлөгөөтэй байна.</div>
<div class="t" style="left:518.00px;top:323.44px;font-size:7.0px;font-family:'Liberation Serif',serif;color:#282828;transform:scaleX(1.0534);transform-origin:0 0;">Ингэснээр эхний жил буюу</div>
<div class="t" style="left:518.00px;top:333.04px;font-size:7.0px;font-family:'Liberation Serif',serif;color:#282828;transform:scaleX(1.0410);transform-origin:0 0;">2020-оос 2021 он хүртэлх ажил</div>
<div class="t" style="left:518.00px;top:342.64px;font-size:7.0px;font-family:'Liberation Serif',serif;color:#282828;transform:scaleX(1.0509);transform-origin:0 0;">хийн хуримтлуулсан орлого</div>
<div class="t" style="left:518.00px;top:352.24px;font-size:7.0px;font-family:'Liberation Serif',serif;color:#282828;transform:scaleX(1.0714);transform-origin:0 0;">бүхий мөнгөн дүнг илүү үр</div>
<div class="t" style="left:518.00px;top:361.84px;font-size:7.0px;font-family:'Liberation Serif',serif;color:#282828;transform:scaleX(1.0414);transform-origin:0 0;">дүнтэй зарцуулж чадах юм.</div>
<div class="t" style="left:518.00px;top:371.44px;font-size:7.0px;font-family:'Liberation Serif',serif;color:#282828;transform:scaleX(1.0400);transform-origin:0 0;">Мөн цаашдын 5жилийн</div>
<div class="t" style="left:518.00px;top:381.04px;font-size:7.0px;font-family:'Liberation Serif',serif;color:#282828;transform:scaleX(1.0501);transform-origin:0 0;">төлөвлөгөөн доторх бүсээ чангалах эхний 2 жил нийхүү эхлэх болно.</div>
<div class="t" style="left:542.60px;top:396.64px;font-size:7.0px;font-family:'Liberation Serif',serif;color:#282828;transform:scaleX(1.0512);transform-origin:0 0;">Хоёр дах жил буюу 2021-2022онд бүсээ чангалах сүүлийн жил эхлэх буюу дээрх жилд</div>
<div class="t" style="left:518.00px;top:406.29px;font-size:7.0px;font-family:'Liberation Serif',serif;color:#282828;transform:scaleX(1.0526);transform-origin:0 0;">дурдагдсан хугацаагүй хадгаламжинд цугларсан мөнгөөр мөн шаардлагатай бол нэмэж зээл авах</div>
<div class="t" style="left:518.00px;top:415.94px;font-size:7.0px;font-family:'Liberation Serif',serif;color:#282828;transform:scaleX(1.0355);transform-origin:0 0;">байдлаар өөртөө машин авах төлөвлөгөөтэй байна. Түүнчлэн ажил эрхлэлтийн байдал /цагийн</div>
<div class="t" style="left:518.00px;top:425.59px;font-size:7.0px;font-family:'Liberation Serif',serif;color:#282828;transform:scaleX(1.0525);transform-origin:0 0;">ажил/ маань тасралтгүй үргэлжлэнэ гэж үзэн орлогоо нэмэгдүүлж хадгаламжинд тодорхой хувийг</div>
<div class="t" style="left:518.00px;top:435.24px;font-size:7.0px;font-family:'Liberation Serif',serif;color:#282828;transform:scaleX(1.0449);transform-origin:0 0;">хийсээр байх болно.</div>
<div class="t" style="left:542.60px;top:455.14px;font-size:7.0px;font-family:'Liberation Serif',serif;color:#282828;transform:scaleX(1.0472);transform-origin:0 0;">Гурав дах жил буюу 2022-2023он энэ жилээс эхлэн</div>
<div class="t" style="left:518.00px;top:464.74px;font-size:7.0px;font-family:'Liberation Serif',serif;color:#282828;transform:scaleX(1.0819);transform-origin:0 0;">санхүүгийн хувьд илүү бие даасан болох, энэ эхээс</div>
<div class="t" style="left:518.00px;top:474.34px;font-size:7.0px;font-family:'Liberation Serif',serif;color:#282828;transform:scaleX(1.0518);transform-origin:0 0;">санхүүгийн хувьд хараат байдлаас гарах өөрийн хувийн</div>
<div class="t" style="left:518.00px;top:483.94px;font-size:7.0px;font-family:'Liberation Serif',serif;color:#282828;transform:scaleX(1.0567);transform-origin:0 0;">хэрэглээний зүйлс (унаа тээвэр, хоол хүн, хувцас г.м) мөн</div>
<div class="t" style="left:518.00px;top:493.54px;font-size:7.0px;font-family:'Liberation Serif',serif;color:#282828;transform:scaleX(1.0523);transform-origin:0 0;">сургалтын төлбөрийг өөрөө бие даан олж хуримтлуулах тал</div>
<div class="t" style="left:518.00px;top:503.14px;font-size:7.0px;font-family:'Liberation Serif',serif;color:#282828;transform:scaleX(1.0195);transform-origin:0 0;">дээр санхүүгийн үйл ажиллагаануудыг авч эхлэх болно. Мөн</div>
<div class="t" style="left:518.00px;top:512.74px;font-size:7.0px;font-family:'Liberation Serif',serif;color:#282828;transform:scaleX(1.0514);transform-origin:0 0;">“FOREX” буюу foreign exchange хэмээх том зах зээлд нэвтэрч</div>
<div class="t" style="left:518.00px;top:522.34px;font-size:7.0px;font-family:'Liberation Serif',serif;color:#282828;transform:scaleX(1.0488);transform-origin:0 0;">орон аккаунт бүхий арилжаач болон хөгжих хүсэлтэй байна.</div>
<div class="t" style="left:542.60px;top:541.64px;font-size:7.0px;font-family:'Liberation Serif',serif;color:#282828;transform:scaleX(1.0501);transform-origin:0 0;">Дөрөв мөн тав дах жилүүд буюу 2023-2024он эдгээр</div>
<div class="t" style="left:518.00px;top:551.30px;font-size:7.0px;font-family:'Liberation Serif',serif;color:#282828;transform:scaleX(1.0509);transform-origin:0 0;">жилүүдэд алсыг харсан санхүүгийн нөхцөл байдлыг бүрэлдүүлэх сонирхолтой байна. 2024онд</div>
<div class="t" style="left:518.00px;top:560.96px;font-size:7.0px;font-family:'Liberation Serif',serif;color:#282828;transform:scaleX(1.0527);transform-origin:0 0;">сургуулиа төгсөж нийгэмд ажлын талбар дээр гарах учраас мөн амьдралаа тохинуулж эхлүүлэхийн</div>
<div class="t" style="left:518.00px;top:570.62px;font-size:7.0px;font-family:'Liberation Serif',serif;color:#282828;transform:scaleX(1.0549);transform-origin:0 0;">тулд байр орон сууц худалдан авах, өөрийн машинаа сайжруулан томруулах гэх мэт хөрөнгүүдийг</div>
<div class="t" style="left:518.00px;top:580.28px;font-size:7.0px;font-family:'Liberation Serif',serif;color:#282828;transform:scaleX(1.0578);transform-origin:0 0;">бий болгоход анхаарч ажиллах болно. Мөн оюутны хөгжлийн зээл буюу Монгол улсын Засгийн</div>
<div class="t" style="left:518.00px;top:589.94px;font-size:7.0px;font-family:'Liberation Serif',serif;color:#282828;transform:scaleX(1.0630);transform-origin:0 0;">газар дах 1500000төгрөгийн зээлийг төлөх.</div>
<div class="t" style="left:672.20px;top:613.47px;font-size:7px;font-family:'Liberation Sans',sans-serif;color:#7f7f7f;">5</div>
<div class="b" style="left:624px;top:251px;width:187px;height:117px;background:radial-gradient(ellipse at 50% 40%, #d3d3d3 0%, #cfcfcf 50%, #dcdcdc 100%)"></div>
<svg style="left:624px;top:251px" width="187" height="117" viewBox="0 0 187 117"><defs><linearGradient id="dv" x1="0" x2="1"><stop offset="0" stop-color="#cfcfcf" stop-opacity="0"/><stop offset="1" stop-color="#9a9a9a"/></linearGradient></defs><rect x="86" y="0" width="8" height="117" fill="url(#dv)" opacity="0.6"/><circle cx="103" cy="39.3" r="11.5" fill="none" stroke="#b4b4b4" stroke-width="5"/><text x="46" y="75.3" font-family="Liberation Serif" font-size="41" font-weight="bold" fill="#a9a9a9" text-anchor="start" textLength="96" lengthAdjust="spacingAndGlyphs">itom</text><circle cx="50.6" cy="47.3" r="3" fill="#b4b4b4"/><rect x="93.6" y="0" width="1.5" height="117" fill="#4e4e4e"/><text x="33.8" y="5.7" font-family="Liberation Serif" font-size="6.3" font-weight="bold" fill="#1a1a1a" text-anchor="middle" textLength="39.5" lengthAdjust="spacingAndGlyphs">Хугацаагүй</text><text x="33.8" y="11.4" font-family="Liberation Serif" font-size="6.3" font-weight="bold" fill="#1a1a1a" text-anchor="middle" textLength="51" lengthAdjust="spacingAndGlyphs">хадгаламжийн</text><text x="33.8" y="17.2" font-family="Liberation Serif" font-size="6.3" font-weight="bold" fill="#1a1a1a" text-anchor="middle" textLength="11" lengthAdjust="spacingAndGlyphs">хүү</text><text x="33.8" y="22" font-family="Liberation Serif" font-size="6.3" font-weight="bold" fill="#1a1a1a" text-anchor="middle" textLength="40" lengthAdjust="spacingAndGlyphs">(Нэг жилийн)</text><text x="124" y="5.7" font-family="Liberation Serif" font-size="6.3" font-weight="bold" fill="#1a1a1a" text-anchor="middle" textLength="39.5" lengthAdjust="spacingAndGlyphs">Хугацаатай</text><text x="124" y="11.4" font-family="Liberation Serif" font-size="6.3" font-weight="bold" fill="#1a1a1a" text-anchor="middle" textLength="51" lengthAdjust="spacingAndGlyphs">хадгаламжийн</text><text x="124" y="17.2" font-family="Liberation Serif" font-size="6.3" font-weight="bold" fill="#1a1a1a" text-anchor="middle" textLength="11" lengthAdjust="spacingAndGlyphs">хүү</text><text x="124" y="22" font-family="Liberation Serif" font-size="6.3" font-weight="bold" fill="#1a1a1a" text-anchor="middle" textLength="40" lengthAdjust="spacingAndGlyphs">(Нэг жилийн)</text><path d="M64 6 Q67 2 72 3.5 Q76 5 75 9 Q73 13 68 13 L66 15 Q63 12 64 6 Z" fill="#8d8d8d"/><path d="M62 17 Q72 14 80 12 L83 15 Q72 19 63 20 Z" fill="#e4e4e4"/><rect x="82.7" y="7.2" width="11" height="7.6" fill="#545454"/><path d="M176 8 Q170 10 170.5 15 Q171 19.5 177.5 19.5 Q184 19.5 184 15 Q184 10 179 8 L181 5 H174 Z" fill="#9c9c9c"/><rect x="160" y="12" width="4" height="7.5" rx="1.5" fill="#9c9c9c"/><rect x="165" y="10" width="4" height="9.5" rx="1.5" fill="#9c9c9c"/><circle cx="157" cy="17.5" r="1.8" fill="#9c9c9c"/><path d="M15.8 30.5 Q19.3 36 22.8 30.5" stroke="#7c7c7c" stroke-width="1.2" fill="none"/><path d="M19.3 24 V27" stroke="#7c7c7c" stroke-width="0.9"/><circle cx="19.3" cy="29.5" r="2.2" fill="#7c7c7c"/><text x="9.2" y="39.8" font-family="Liberation Sans" font-size="4.2" font-weight="bold" fill="#858585" text-anchor="start" textLength="21.6" lengthAdjust="spacingAndGlyphs">ТӨРИЙН</text><text x="12.7" y="43.3" font-family="Liberation Sans" font-size="4.2" font-weight="bold" fill="#858585" text-anchor="start" textLength="14" lengthAdjust="spacingAndGlyphs">БАНК</text><text x="8.9" y="52.2" font-family="Liberation Serif" font-size="6.6" font-weight="bold" fill="#9c9c9c" text-anchor="start" textLength="22.6" lengthAdjust="spacingAndGlyphs">6-7.2%</text><path d="M114.0 30.5 Q117.5 36 121.0 30.5" stroke="#7c7c7c" stroke-width="1.2" fill="none"/><path d="M117.5 24 V27" stroke="#7c7c7c" stroke-width="0.9"/><circle cx="117.5" cy="29.5" r="2.2" fill="#7c7c7c"/><text x="107" y="39.8" font-family="Liberation Sans" font-size="4.2" font-weight="bold" fill="#858585" text-anchor="start" textLength="21.6" lengthAdjust="spacingAndGlyphs">ТӨРИЙН</text><text x="110.5" y="43.3" font-family="Liberation Sans" font-size="4.2" font-weight="bold" fill="#858585" text-anchor="start" textLength="14" lengthAdjust="spacingAndGlyphs">БАНК</text><text x="109" y="52.2" font-family="Liberation Serif" font-size="6.6" font-weight="bold" fill="#9c9c9c" text-anchor="start" textLength="19.1" lengthAdjust="spacingAndGlyphs">15.2%</text><rect x="49" y="33.5" width="9" height="9.5" rx="3" fill="#ececec" stroke="#8f8f8f" stroke-width="0.8"/><circle cx="53.5" cy="38.5" r="2" fill="#999"/><text x="61" y="37.1" font-family="Liberation Sans" font-size="3.7" font-weight="bold" fill="#8a8a8a" text-anchor="start" textLength="26.6" lengthAdjust="spacingAndGlyphs">УЛААНБААТАР</text><text x="61" y="41.7" font-family="Liberation Sans" font-size="3.7" font-weight="bold" fill="#8a8a8a" text-anchor="start" textLength="24" lengthAdjust="spacingAndGlyphs">ХОТЫН БАНК</text><text x="62" y="52.2" font-family="Liberation Serif" font-size="6.6" font-weight="bold" fill="#a6a6a6" text-anchor="start" textLength="15.3" lengthAdjust="spacingAndGlyphs">7.2%</text><rect x="144" y="33.5" width="9" height="9.5" rx="3" fill="#ececec" stroke="#8f8f8f" stroke-width="0.8"/><circle cx="148.5" cy="38.5" r="2" fill="#999"/><text x="155.3" y="37.1" font-family="Liberation Sans" font-size="3.7" font-weight="bold" fill="#8a8a8a" text-anchor="start" textLength="26.6" lengthAdjust="spacingAndGlyphs">УЛААНБААТАР</text><text x="155.3" y="41.7" font-family="Liberation Sans" font-size="3.7" font-weight="bold" fill="#8a8a8a" text-anchor="start" textLength="24" lengthAdjust="spacingAndGlyphs">ХОТЫН БАНК</text><text x="155.4" y="52.2" font-family="Liberation Serif" font-size="6.6" font-weight="bold" fill="#a6a6a6" text-anchor="start" textLength="19.6" lengthAdjust="spacingAndGlyphs">15.6%</text><rect x="3.1" y="57.6" width="7.9" height="7.7" rx="2" fill="#262626"/><path d="M7.050000000000001 57.6 V65.3 M3.1 61.45 H11.0" stroke="#c9c9c9" stroke-width="1"/><text x="13" y="63.7" font-family="Liberation Sans" font-size="5.2" font-weight="bold" fill="#1e1e1e" text-anchor="start" textLength="29.5" lengthAdjust="spacingAndGlyphs">ХААН БАНК</text><text x="11.8" y="74" font-family="Liberation Serif" font-size="7.2" font-weight="bold" fill="#222" text-anchor="start" textLength="22.4" lengthAdjust="spacingAndGlyphs">6-7.2%</text><rect x="99.7" y="57.6" width="7.9" height="7.7" rx="2" fill="#262626"/><path d="M103.65 57.6 V65.3 M99.7 61.45 H107.60000000000001" stroke="#c9c9c9" stroke-width="1"/><text x="110" y="63.7" font-family="Liberation Sans" font-size="5.2" font-weight="bold" fill="#1e1e1e" text-anchor="start" textLength="29.5" lengthAdjust="spacingAndGlyphs">ХААН БАНК</text><text x="111.2" y="74" font-family="Liberation Serif" font-size="7.2" font-weight="bold" fill="#222" text-anchor="start" textLength="19.1" lengthAdjust="spacingAndGlyphs">15.1%</text><path d="M49.5 57.5 L57.0 65 M57.0 57.5 L49.5 65 M53.25 56.5 V66 M49.0 61.25 H57.5" stroke="#a0a0a0" stroke-width="1"/><text x="58.2" y="65.3" font-family="Liberation Sans" font-size="5.8" font-weight="bold" fill="#262626" text-anchor="start" textLength="27.5" lengthAdjust="spacingAndGlyphs">ХАСBANK</text><text x="63" y="74" font-family="Liberation Serif" font-size="6.8" font-weight="bold" fill="#a8a8a8" text-anchor="start" textLength="19" lengthAdjust="spacingAndGlyphs">6.5-7.7%</text><path d="M145 57.5 L152.5 65 M152.5 57.5 L145 65 M148.75 56.5 V66 M144.5 61.25 H153" stroke="#a0a0a0" stroke-width="1"/><text x="154.3" y="65.3" font-family="Liberation Sans" font-size="5.8" font-weight="bold" fill="#262626" text-anchor="start" textLength="27.5" lengthAdjust="spacingAndGlyphs">ХАСBANK</text><text x="146.1" y="74" font-family="Liberation Serif" font-size="6.8" font-weight="bold" fill="#b0b0b0" text-anchor="start" textLength="36.6" lengthAdjust="spacingAndGlyphs">13.3-14.1%</text><rect x="17.8" y="80.6" width="7.8" height="7.6" fill="#777"/><path d="M19.3 86.5 L24.1 82" stroke="#bbb" stroke-width="1.2"/><text x="4.2" y="93.1" font-family="Liberation Sans" font-size="4.4" font-weight="bold" fill="#5c5c5c" text-anchor="start" textLength="34.4" lengthAdjust="spacingAndGlyphs">ГОЛОМТ БАНК</text><text x="11.8" y="102.4" font-family="Liberation Serif" font-size="7" font-weight="bold" fill="#3a3a3a" text-anchor="start" textLength="22.4" lengthAdjust="spacingAndGlyphs">6-7.2%</text><rect x="116.7" y="80.6" width="7.8" height="7.6" fill="#777"/><path d="M118.2 86.5 L123.0 82" stroke="#bbb" stroke-width="1.2"/><text x="103" y="93.1" font-family="Liberation Sans" font-size="4.4" font-weight="bold" fill="#5c5c5c" text-anchor="start" textLength="34.4" lengthAdjust="spacingAndGlyphs">ГОЛОМТ БАНК</text><text x="111.2" y="102.4" font-family="Liberation Serif" font-size="7" font-weight="bold" fill="#3a3a3a" text-anchor="start" textLength="19.1" lengthAdjust="spacingAndGlyphs">15.2%</text><circle cx="54.9" cy="87.2" r="3.6" fill="none" stroke="#5a5a5a" stroke-width="1.4"/><text x="60" y="89.9" font-family="Liberation Sans" font-size="8.4" font-weight="bold" fill="#575757" text-anchor="start" textLength="20.5" lengthAdjust="spacingAndGlyphs">TDB</text><rect x="51" y="91.8" width="29" height="0.9" fill="#8f8f8f"/><text x="65" y="102.4" font-family="Liberation Serif" font-size="7" font-weight="bold" fill="#3a3a3a" text-anchor="start" textLength="9.4" lengthAdjust="spacingAndGlyphs">6%</text><circle cx="153.9" cy="87.2" r="3.6" fill="none" stroke="#5a5a5a" stroke-width="1.4"/><text x="158.1" y="89.9" font-family="Liberation Sans" font-size="8.4" font-weight="bold" fill="#575757" text-anchor="start" textLength="20.5" lengthAdjust="spacingAndGlyphs">TDB</text><rect x="150" y="91.8" width="29" height="0.9" fill="#8f8f8f"/><text x="160.9" y="102.4" font-family="Liberation Serif" font-size="7" font-weight="bold" fill="#3a3a3a" text-anchor="start" textLength="13.1" lengthAdjust="spacingAndGlyphs">15%</text></svg>
<svg style="left:725px;top:435px" width="100" height="110" viewBox="0 0 100 110"><rect x="34.10000000000002" y="5.600000000000023" width="31.799999999999955" height="12.5" fill="#6b6b6b"/><text x="40" y="15.300000000000011" font-family="Liberation Sans" font-size="8.2" fill="#e8e8e8" textLength="19.3" lengthAdjust="spacingAndGlyphs">Forex</text><path d="M34.1 11.7 L23.5 11.7 L23.5 27.5 M65.9 11.7 L77.9 11.7 L77.9 27.5" stroke="#333" stroke-width="0.9" fill="none"/><path d="M21.7 27.1 L23.5 29.6 L25.3 27.1 Z" fill="#333"/><path d="M76.1 27.1 L77.9 29.6 L79.7 27.1 Z" fill="#333"/><rect x="7.2000000000000455" y="29.600000000000023" width="31.5" height="18.899999999999977" fill="#6b6b6b"/><rect x="61.299999999999955" y="29.600000000000023" width="31.5" height="18.899999999999977" fill="#6b6b6b"/><path d="M23.5 48.5 L23.5 51.5 M23.5 51.5 L77.9 51.5 L77.9 55.5 M23.5 51.5 L23.5 55.5" stroke="#333" stroke-width="0.9" fill="none"/><path d="M21.7 54.6 L23.5 57.1 L25.3 54.6 Z" fill="#333"/><path d="M76.1 54.6 L77.9 57.1 L79.7 54.6 Z" fill="#333"/><path d="M50.4 51.5 L50.4 78.4" stroke="#9a9a9a" stroke-width="1.1" fill="none"/><path d="M23.5 78.4 L77.9 78.4 M23.5 78.4 L23.5 82.5 M77.9 78.4 L77.9 82.5" stroke="#333" stroke-width="0.9" fill="none"/><path d="M21.7 81.8 L23.5 84.3 L25.3 81.8 Z" fill="#333"/><path d="M76.1 81.8 L77.9 84.3 L79.7 81.8 Z" fill="#333"/><rect x="7.2000000000000455" y="57.10000000000002" width="31.5" height="18.399999999999977" fill="#6b6b6b"/><rect x="61.299999999999955" y="57.10000000000002" width="31.5" height="18.399999999999977" fill="#6b6b6b"/><rect x="8" y="84.29999999999995" width="31.5" height="18.90000000000009" fill="#6b6b6b"/><rect x="61.299999999999955" y="84.29999999999995" width="31.5" height="18.90000000000009" fill="#6b6b6b"/><rect x="20" y="33" width="7" height="5.5" fill="#f0f0f0"/><rect x="19" y="32" width="9" height="1.2" fill="#f0f0f0"/><text x="23.0" y="42.5" font-family="Liberation Sans" font-size="3.2" fill="#f0f0f0" text-anchor="middle">Bancos</text><text x="23.0" y="45.8" font-family="Liberation Sans" font-size="3.2" fill="#f0f0f0" text-anchor="middle">Comerciales</text><rect x="73.5" y="34" width="8" height="5" fill="#f0f0f0"/><path d="M72.5 34 L77.5 31.5 L82.5 34 Z" fill="#f0f0f0"/><text x="77.0" y="42.5" font-family="Liberation Sans" font-size="3.2" fill="#f0f0f0" text-anchor="middle">Bancos</text><text x="77.0" y="45.8" font-family="Liberation Sans" font-size="3.2" fill="#f0f0f0" text-anchor="middle">Centrales</text><rect x="20.5" y="60" width="5" height="6.5" fill="none" stroke="#f0f0f0" stroke-width="0.7"/><text x="23.0" y="70.0" font-family="Liberation Sans" font-size="3.2" fill="#f0f0f0" text-anchor="middle">Grandes</text><text x="23.0" y="73.3" font-family="Liberation Sans" font-size="3.2" fill="#f0f0f0" text-anchor="middle">Empresas</text><rect x="74" y="62" width="7" height="5" fill="#f0f0f0"/><circle cx="77.5" cy="60.5" r="1.6" fill="#f0f0f0"/><text x="77.0" y="70.0" font-family="Liberation Sans" font-size="3.2" fill="#f0f0f0" text-anchor="middle">Fondos y entidades</text><text x="77.0" y="73.3" font-family="Liberation Sans" font-size="3.2" fill="#f0f0f0" text-anchor="middle">de inversión</text><circle cx="23.5" cy="89" r="2" fill="#f0f0f0"/><path d="M19.5 94.5 Q23.5 89.5 27.5 94.5 Z" fill="#f0f0f0"/><text x="23.5" y="99.0" font-family="Liberation Sans" font-size="3.2" fill="#f0f0f0" text-anchor="middle">Individuos</text><circle cx="76" cy="89" r="2.5" fill="none" stroke="#f0f0f0" stroke-width="0.7"/><text x="77.0" y="96.5" font-family="Liberation Sans" font-size="3.2" fill="#f0f0f0" text-anchor="middle">Empresas</text><text x="77.0" y="99.8" font-family="Liberation Sans" font-size="3.2" fill="#f0f0f0" text-anchor="middle">de Forex</text></svg>
<div class="t" style="left:1076.50px;top:151.71px;font-size:6.6px;font-family:'Liberation Sans',sans-serif;color:#8c8c8c;font-style:italic;font-weight:bold;transform:scaleX(0.9597);transform-origin:0 0;">Хувь хүний санхүүгийн төлөвлөлт  ID: 19B1NUM1584</div>
<div class="t" style="left:934.20px;top:176.23px;font-size:7.33px;font-family:'Liberation Serif',serif;color:#141414;font-weight:bold;transform:scaleX(1.0034);transform-origin:0 0;">Төсөв /5жил/</div>
<div class="t" style="left:938.30px;top:205.83px;font-size:7.33px;font-family:'Liberation Serif',serif;color:#141414;font-weight:bold;">ОН</div>
<div class="t" style="left:938.30px;top:216.03px;font-size:7.33px;font-family:'Liberation Serif',serif;color:#141414;font-weight:bold;transform:scaleX(0.9982);transform-origin:0 0;">ДАРААЛАЛ</div>
<div class="t" style="left:985.90px;top:205.83px;font-size:7.33px;font-family:'Liberation Serif',serif;color:#141414;font-weight:bold;transform:scaleX(1.0190);transform-origin:0 0;">ОРЛОГО</div>
<div class="t" style="left:1059.00px;top:205.83px;font-size:7.33px;font-family:'Liberation Serif',serif;color:#141414;font-weight:bold;">ДҮН</div>
<div class="t" style="left:1059.00px;top:216.03px;font-size:7.33px;font-family:'Liberation Serif',serif;color:#141414;font-weight:bold;">/ТӨГ/</div>
<div class="t" style="left:1097.00px;top:205.83px;font-size:7.33px;font-family:'Liberation Serif',serif;color:#141414;font-weight:bold;transform:scaleX(1.0631);transform-origin:0 0;">ЗАРЛАГА</div>
<div class="t" style="left:1210.00px;top:205.83px;font-size:7.33px;font-family:'Liberation Serif',serif;color:#141414;font-weight:bold;">ДҮН</div>
<div class="t" style="left:1210.00px;top:216.03px;font-size:7.33px;font-family:'Liberation Serif',serif;color:#141414;font-weight:bold;">/ТӨГ/</div>
<div class="b" style="left:934px;top:220px;width:311px;height:1px;background:#7a7a7a"></div>
<div class="b" style="left:934px;top:221px;width:48px;height:59px;background:#f2f2f2"></div>
<div class="b" style="left:934px;top:281px;width:48px;height:258px;background:#f2f2f2"></div>
<div class="b" style="left:983px;top:221px;width:262px;height:9px;background:#f2f2f2"></div>
<div class="t" style="left:986.60px;top:225.33px;font-size:7.33px;font-family:'Liberation Serif',serif;color:#333;">Бэлэн мөнгө</div>
<div class="t" style="left:1058.60px;top:225.33px;font-size:7.33px;font-family:'Liberation Serif',serif;color:#333;">275000</div>
<div class="t" style="left:1097.00px;top:225.33px;font-size:7.33px;font-family:'Liberation Serif',serif;color:#333;">Хоол хүнс</div>
<div class="t" style="left:1210.00px;top:225.33px;font-size:7.33px;font-family:'Liberation Serif',serif;color:#333;">1750000</div>
<div class="t" style="left:986.60px;top:235.53px;font-size:7.33px;font-family:'Liberation Serif',serif;color:#333;">Хадгаламжийн хүү</div>
<div class="t" style="left:1058.60px;top:235.53px;font-size:7.33px;font-family:'Liberation Serif',serif;color:#333;">417600</div>
<div class="t" style="left:1097.00px;top:235.53px;font-size:7.33px;font-family:'Liberation Serif',serif;color:#333;">Унаа тээвэр</div>
<div class="t" style="left:1210.00px;top:235.53px;font-size:7.33px;font-family:'Liberation Serif',serif;color:#333;">400000</div>
<div class="b" style="left:983px;top:240px;width:262px;height:10px;background:#f2f2f2"></div>
<div class="t" style="left:986.60px;top:245.43px;font-size:7.33px;font-family:'Liberation Serif',serif;color:#333;">Цалин</div>
<div class="t" style="left:1058.60px;top:245.43px;font-size:7.33px;font-family:'Liberation Serif',serif;color:#333;">3840000</div>
<div class="t" style="left:1097.00px;top:245.43px;font-size:7.33px;font-family:'Liberation Serif',serif;color:#333;">Гоо сайхан</div>
<div class="t" style="left:1210.00px;top:245.43px;font-size:7.33px;font-family:'Liberation Serif',serif;color:#333;">360000</div>
<div class="t" style="left:986.60px;top:255.33px;font-size:7.33px;font-family:'Liberation Serif',serif;color:#333;">Хандив</div>
<div class="t" style="left:1058.60px;top:255.33px;font-size:7.33px;font-family:'Liberation Serif',serif;color:#333;">100000</div>
<div class="t" style="left:1097.00px;top:255.33px;font-size:7.33px;font-family:'Liberation Serif',serif;color:#333;">Хувцас</div>
<div class="t" style="left:1210.00px;top:255.33px;font-size:7.33px;font-family:'Liberation Serif',serif;color:#333;">1450000</div>
<div class="b" style="left:983px;top:260px;width:262px;height:10px;background:#f2f2f2"></div>
<div class="t" style="left:986.60px;top:265.33px;font-size:7.33px;font-family:'Liberation Serif',serif;color:#333;">Бусад</div>
<div class="t" style="left:1058.60px;top:265.33px;font-size:7.33px;font-family:'Liberation Serif',serif;color:#333;">50000</div>
<div class="t" style="left:1097.00px;top:265.33px;font-size:7.33px;font-family:'Liberation Serif',serif;color:#333;">Бусад</div>
<div class="t" style="left:1210.00px;top:265.33px;font-size:7.33px;font-family:'Liberation Serif',serif;color:#333;">560000</div>
<div class="t" style="left:986.60px;top:275.33px;font-size:7.33px;font-family:'Liberation Serif',serif;color:#141414;font-weight:bold;">Нийт</div>
<div class="t" style="left:1058.60px;top:275.33px;font-size:7.33px;font-family:'Liberation Serif',serif;color:#141414;font-weight:bold;">4682600</div>
<div class="t" style="left:1097.00px;top:275.33px;font-size:7.33px;font-family:'Liberation Serif',serif;color:#141414;font-weight:bold;">Нийт</div>
<div class="t" style="left:1210.00px;top:275.33px;font-size:7.33px;font-family:'Liberation Serif',serif;color:#141414;font-weight:bold;">4520000</div>
<div class="t" style="left:938.30px;top:244.53px;font-size:7.33px;font-family:'Liberation Serif',serif;color:#141414;font-weight:bold;">ЭХНИЙ</div>
<div class="t" style="left:938.30px;top:253.73px;font-size:7.33px;font-family:'Liberation Serif',serif;color:#141414;font-weight:bold;">ЖИЛ</div>
<div class="t" style="left:938.30px;top:263.13px;font-size:7.33px;font-family:'Liberation Serif',serif;color:#141414;font-weight:bold;">БУЮУ</div>
<div class="t" style="left:938.30px;top:273.03px;font-size:7.33px;font-family:'Liberation Serif',serif;color:#141414;font-weight:bold;">2020ОН</div>
<div class="b" style="left:983px;top:281px;width:262px;height:10px;background:#f2f2f2"></div>
<div class="t" style="left:986.60px;top:286.63px;font-size:7.33px;font-family:'Liberation Serif',serif;color:#333;">Бэлэн мөнгө</div>
<div class="t" style="left:1058.60px;top:286.63px;font-size:7.33px;font-family:'Liberation Serif',serif;color:#333;">20005000</div>
<div class="t" style="left:1097.00px;top:286.63px;font-size:7.33px;font-family:'Liberation Serif',serif;color:#333;">Хоол хүнс</div>
<div class="t" style="left:1210.00px;top:286.63px;font-size:7.33px;font-family:'Liberation Serif',serif;color:#333;">1750000</div>
<div class="t" style="left:986.60px;top:296.73px;font-size:7.33px;font-family:'Liberation Serif',serif;color:#333;">Хадгаламжийн хүү</div>
<div class="t" style="left:1058.60px;top:296.73px;font-size:7.33px;font-family:'Liberation Serif',serif;color:#333;">417600</div>
<div class="t" style="left:1097.00px;top:296.73px;font-size:7.33px;font-family:'Liberation Serif',serif;color:#333;">Унаа тээвэр</div>
<div class="t" style="left:1210.00px;top:296.73px;font-size:7.33px;font-family:'Liberation Serif',serif;color:#333;">400000</div>
<div class="b" style="left:983px;top:301px;width:262px;height:11px;background:#f2f2f2"></div>
<div class="t" style="left:986.60px;top:306.93px;font-size:7.33px;font-family:'Liberation Serif',serif;color:#333;">Цалин</div>
<div class="t" style="left:1058.60px;top:306.93px;font-size:7.33px;font-family:'Liberation Serif',serif;color:#333;">3840000</div>
<div class="t" style="left:1097.00px;top:306.93px;font-size:7.33px;font-family:'Liberation Serif',serif;color:#333;">Гоо сайхан</div>
<div class="t" style="left:1210.00px;top:306.93px;font-size:7.33px;font-family:'Liberation Serif',serif;color:#333;">360000</div>
<div class="t" style="left:986.60px;top:316.83px;font-size:7.33px;font-family:'Liberation Serif',serif;color:#333;">Хандив</div>
<div class="t" style="left:1058.60px;top:316.83px;font-size:7.33px;font-family:'Liberation Serif',serif;color:#333;">75000</div>
<div class="t" style="left:1097.00px;top:316.83px;font-size:7.33px;font-family:'Liberation Serif',serif;color:#333;">Хувцас</div>
<div class="t" style="left:1210.00px;top:316.83px;font-size:7.33px;font-family:'Liberation Serif',serif;color:#333;">1450000</div>
<div class="b" style="left:983px;top:322px;width:262px;height:10px;background:#f2f2f2"></div>
<div class="t" style="left:986.60px;top:326.93px;font-size:7.33px;font-family:'Liberation Serif',serif;color:#333;">Бусад</div>
<div class="t" style="left:1058.60px;top:326.93px;font-size:7.33px;font-family:'Liberation Serif',serif;color:#333;">56000</div>
<div class="t" style="left:1097.00px;top:326.93px;font-size:7.33px;font-family:'Liberation Serif',serif;color:#333;">Бусад</div>
<div class="t" style="left:1210.00px;top:326.93px;font-size:7.33px;font-family:'Liberation Serif',serif;color:#333;">24060000</div>
<div class="t" style="left:986.60px;top:337.83px;font-size:7.33px;font-family:'Liberation Serif',serif;color:#141414;font-weight:bold;">Нийт</div>
<div class="t" style="left:1058.60px;top:337.83px;font-size:7.33px;font-family:'Liberation Serif',serif;color:#333;">24006600</div>
<div class="t" style="left:1097.00px;top:337.83px;font-size:7.33px;font-family:'Liberation Serif',serif;color:#141414;font-weight:bold;">Нийт</div>
<div class="t" style="left:1210.00px;top:337.83px;font-size:7.33px;font-family:'Liberation Serif',serif;color:#141414;font-weight:bold;">28520000</div>
<div class="t" style="left:938.30px;top:304.93px;font-size:7.33px;font-family:'Liberation Serif',serif;color:#141414;font-weight:bold;">2021ОН</div>
<div class="b" style="left:983px;top:342px;width:262px;height:14px;background:#f2f2f2"></div>
<div class="t" style="left:986.60px;top:351.13px;font-size:7.33px;font-family:'Liberation Serif',serif;color:#333;">Бэлэн мөнгө</div>
<div class="t" style="left:1058.60px;top:351.13px;font-size:7.33px;font-family:'Liberation Serif',serif;color:#333;">150000</div>
<div class="t" style="left:1097.00px;top:351.13px;font-size:7.33px;font-family:'Liberation Serif',serif;color:#333;">Хоол хүнс</div>
<div class="t" style="left:1210.00px;top:351.13px;font-size:7.33px;font-family:'Liberation Serif',serif;color:#333;">1750000</div>
<div class="t" style="left:986.60px;top:362.43px;font-size:7.33px;font-family:'Liberation Serif',serif;color:#333;">Хадгаламжийн хүү</div>
<div class="t" style="left:1058.60px;top:362.43px;font-size:7.33px;font-family:'Liberation Serif',serif;color:#333;">417600</div>
<div class="t" style="left:1097.00px;top:362.43px;font-size:7.33px;font-family:'Liberation Serif',serif;color:#333;">Унаа тээвэр</div>
<div class="t" style="left:1210.00px;top:362.43px;font-size:7.33px;font-family:'Liberation Serif',serif;color:#333;">400000</div>
<div class="b" style="left:983px;top:367px;width:262px;height:11px;background:#f2f2f2"></div>
<div class="t" style="left:986.60px;top:372.83px;font-size:7.33px;font-family:'Liberation Serif',serif;color:#333;">Цалин</div>
<div class="t" style="left:1058.60px;top:372.83px;font-size:7.33px;font-family:'Liberation Serif',serif;color:#333;">3840000</div>
<div class="t" style="left:1097.00px;top:372.83px;font-size:7.33px;font-family:'Liberation Serif',serif;color:#333;">Гоо сайхан</div>
<div class="t" style="left:1210.00px;top:372.83px;font-size:7.33px;font-family:'Liberation Serif',serif;color:#333;">360000</div>
<div class="t" style="left:986.60px;top:384.93px;font-size:7.33px;font-family:'Liberation Serif',serif;color:#333;">Хандив</div>
<div class="t" style="left:1058.60px;top:384.93px;font-size:7.33px;font-family:'Liberation Serif',serif;color:#333;">0</div>
<div class="t" style="left:1097.00px;top:384.93px;font-size:7.33px;font-family:'Liberation Serif',serif;color:#333;">Хувцас</div>
<div class="t" style="left:1210.00px;top:384.93px;font-size:7.33px;font-family:'Liberation Serif',serif;color:#333;">1450000</div>
<div class="b" style="left:983px;top:390px;width:262px;height:10px;background:#f2f2f2"></div>
<div class="t" style="left:986.60px;top:395.33px;font-size:7.33px;font-family:'Liberation Serif',serif;color:#333;">Бусад</div>
<div class="t" style="left:1058.60px;top:395.33px;font-size:7.33px;font-family:'Liberation Serif',serif;color:#333;">78000</div>
<div class="t" style="left:1097.00px;top:395.33px;font-size:7.33px;font-family:'Liberation Serif',serif;color:#333;">Бусад</div>
<div class="t" style="left:1210.00px;top:395.33px;font-size:7.33px;font-family:'Liberation Serif',serif;color:#333;">560000</div>
<div class="t" style="left:986.60px;top:406.53px;font-size:7.33px;font-family:'Liberation Serif',serif;color:#141414;font-weight:bold;">Нийт</div>
<div class="t" style="left:1058.60px;top:406.53px;font-size:7.33px;font-family:'Liberation Serif',serif;color:#333;">4485600</div>
<div class="t" style="left:1097.00px;top:406.53px;font-size:7.33px;font-family:'Liberation Serif',serif;color:#141414;font-weight:bold;">Нийт</div>
<div class="t" style="left:1210.00px;top:406.53px;font-size:7.33px;font-family:'Liberation Serif',serif;color:#141414;font-weight:bold;">4520000</div>
<div class="t" style="left:938.30px;top:367.23px;font-size:7.33px;font-family:'Liberation Serif',serif;color:#141414;font-weight:bold;">2022ОН</div>
<div class="b" style="left:983px;top:411px;width:262px;height:11px;background:#f2f2f2"></div>
<div class="t" style="left:986.60px;top:417.23px;font-size:7.33px;font-family:'Liberation Serif',serif;color:#333;">Бэлэн мөнгө</div>
<div class="t" style="left:1058.60px;top:417.23px;font-size:7.33px;font-family:'Liberation Serif',serif;color:#333;">45000</div>
<div class="t" style="left:1097.00px;top:417.23px;font-size:7.33px;font-family:'Liberation Serif',serif;color:#333;">Хоол хүнс</div>
<div class="t" style="left:1210.00px;top:417.23px;font-size:7.33px;font-family:'Liberation Serif',serif;color:#333;">1750000</div>
<div class="t" style="left:986.60px;top:428.13px;font-size:7.33px;font-family:'Liberation Serif',serif;color:#333;">Хадгаламжийн хүү</div>
<div class="t" style="left:1058.60px;top:428.13px;font-size:7.33px;font-family:'Liberation Serif',serif;color:#333;">417600</div>
<div class="t" style="left:1097.00px;top:428.13px;font-size:7.33px;font-family:'Liberation Serif',serif;color:#333;">Унаа тээвэр</div>
<div class="t" style="left:1210.00px;top:428.13px;font-size:7.33px;font-family:'Liberation Serif',serif;color:#333;">400000</div>
<div class="b" style="left:983px;top:433px;width:262px;height:10px;background:#f2f2f2"></div>
<div class="t" style="left:986.60px;top:438.53px;font-size:7.33px;font-family:'Liberation Serif',serif;color:#333;">Цалин</div>
<div class="t" style="left:1058.60px;top:438.53px;font-size:7.33px;font-family:'Liberation Serif',serif;color:#333;">3840000</div>
<div class="t" style="left:1097.00px;top:438.53px;font-size:7.33px;font-family:'Liberation Serif',serif;color:#333;">Гоо сайхан</div>
<div class="t" style="left:1210.00px;top:438.53px;font-size:7.33px;font-family:'Liberation Serif',serif;color:#333;">360000</div>
<div class="t" style="left:986.60px;top:448.63px;font-size:7.33px;font-family:'Liberation Serif',serif;color:#333;">Хандив</div>
<div class="t" style="left:1058.60px;top:448.63px;font-size:7.33px;font-family:'Liberation Serif',serif;color:#333;">45000</div>
<div class="t" style="left:1097.00px;top:448.63px;font-size:7.33px;font-family:'Liberation Serif',serif;color:#333;">Хувцас</div>
<div class="t" style="left:1210.00px;top:448.63px;font-size:7.33px;font-family:'Liberation Serif',serif;color:#333;">1450000</div>
<div class="b" style="left:983px;top:453px;width:262px;height:11px;background:#f2f2f2"></div>
<div class="t" style="left:986.60px;top:459.03px;font-size:7.33px;font-family:'Liberation Serif',serif;color:#333;">Бусад</div>
<div class="t" style="left:1058.60px;top:459.03px;font-size:7.33px;font-family:'Liberation Serif',serif;color:#333;">90000</div>
<div class="t" style="left:1097.00px;top:459.03px;font-size:7.33px;font-family:'Liberation Serif',serif;color:#333;">Бусад</div>
<div class="t" style="left:1210.00px;top:459.03px;font-size:7.33px;font-family:'Liberation Serif',serif;color:#333;">560000</div>
<div class="t" style="left:986.60px;top:470.33px;font-size:7.33px;font-family:'Liberation Serif',serif;color:#141414;font-weight:bold;">Нийт</div>
<div class="t" style="left:1058.60px;top:470.33px;font-size:7.33px;font-family:'Liberation Serif',serif;color:#333;">4437600</div>
<div class="t" style="left:1097.00px;top:470.33px;font-size:7.33px;font-family:'Liberation Serif',serif;color:#141414;font-weight:bold;">Нийт</div>
<div class="t" style="left:1210.00px;top:470.33px;font-size:7.33px;font-family:'Liberation Serif',serif;color:#141414;font-weight:bold;">4520000</div>
<div class="t" style="left:938.30px;top:435.33px;font-size:7.33px;font-family:'Liberation Serif',serif;color:#141414;font-weight:bold;">2023ОН</div>
<div class="b" style="left:983px;top:475px;width:262px;height:11px;background:#f2f2f2"></div>
<div class="t" style="left:986.60px;top:480.83px;font-size:7.33px;font-family:'Liberation Serif',serif;color:#333;">Бэлэн мөнгө</div>
<div class="t" style="left:1097.00px;top:480.83px;font-size:7.33px;font-family:'Liberation Serif',serif;color:#333;">Хоол хүнс</div>
<div class="t" style="left:1210.00px;top:480.83px;font-size:7.33px;font-family:'Liberation Serif',serif;color:#333;">1750000</div>
<div class="t" style="left:986.60px;top:493.33px;font-size:7.33px;font-family:'Liberation Serif',serif;color:#333;">Хадгаламжийн хүү</div>
<div class="t" style="left:1058.60px;top:493.33px;font-size:7.33px;font-family:'Liberation Serif',serif;color:#333;">417600</div>
<div class="t" style="left:1097.00px;top:493.33px;font-size:7.33px;font-family:'Liberation Serif',serif;color:#333;">Унаа тээвэр</div>
<div class="t" style="left:1210.00px;top:493.33px;font-size:7.33px;font-family:'Liberation Serif',serif;color:#333;">400000</div>
<div class="b" style="left:983px;top:498px;width:262px;height:11px;background:#f2f2f2"></div>
<div class="t" style="left:986.60px;top:504.23px;font-size:7.33px;font-family:'Liberation Serif',serif;color:#333;">Цалин</div>
<div class="t" style="left:1058.60px;top:504.23px;font-size:7.33px;font-family:'Liberation Serif',serif;color:#333;">3840000</div>
<div class="t" style="left:1097.00px;top:504.23px;font-size:7.33px;font-family:'Liberation Serif',serif;color:#333;">Гоо сайхан</div>
<div class="t" style="left:1210.00px;top:504.23px;font-size:7.33px;font-family:'Liberation Serif',serif;color:#333;">360000</div>
<div class="t" style="left:986.60px;top:514.33px;font-size:7.33px;font-family:'Liberation Serif',serif;color:#333;">Хандив</div>
<div class="t" style="left:1058.60px;top:514.33px;font-size:7.33px;font-family:'Liberation Serif',serif;color:#333;">70000</div>
<div class="t" style="left:1097.00px;top:514.33px;font-size:7.33px;font-family:'Liberation Serif',serif;color:#333;">Хувцас</div>
<div class="t" style="left:1210.00px;top:514.33px;font-size:7.33px;font-family:'Liberation Serif',serif;color:#333;">1450000</div>
<div class="b" style="left:983px;top:519px;width:262px;height:10px;background:#f2f2f2"></div>
<div class="t" style="left:986.60px;top:524.03px;font-size:7.33px;font-family:'Liberation Serif',serif;color:#333;">Бусад</div>
<div class="t" style="left:1058.60px;top:524.03px;font-size:7.33px;font-family:'Liberation Serif',serif;color:#333;">0</div>
<div class="t" style="left:1097.00px;top:524.03px;font-size:7.33px;font-family:'Liberation Serif',serif;color:#333;">Бусад</div>
<div class="t" style="left:1210.00px;top:524.03px;font-size:7.33px;font-family:'Liberation Serif',serif;color:#333;">560000</div>
<div class="t" style="left:986.60px;top:533.93px;font-size:7.33px;font-family:'Liberation Serif',serif;color:#141414;font-weight:bold;">Нийт</div>
<div class="t" style="left:1058.60px;top:533.93px;font-size:7.33px;font-family:'Liberation Serif',serif;color:#333;">4372600</div>
<div class="t" style="left:1097.00px;top:533.93px;font-size:7.33px;font-family:'Liberation Serif',serif;color:#141414;font-weight:bold;">Нийт</div>
<div class="t" style="left:1210.00px;top:533.93px;font-size:7.33px;font-family:'Liberation Serif',serif;color:#141414;font-weight:bold;">4520000</div>
<div class="t" style="left:938.30px;top:498.23px;font-size:7.33px;font-family:'Liberation Serif',serif;color:#141414;font-weight:bold;">2024ОН</div>
<div class="b" style="left:982px;top:221px;width:1px;height:318px;background:#7a7a7a"></div>
<div class="t" style="left:1088.00px;top:613.47px;font-size:7px;font-family:'Liberation Sans',sans-serif;color:#7f7f7f;">6</div>
<div class="b" style="left:0px;top:0px;width:1366px;height:26px;background:#2b579a"></div>
<svg style="left:840px;top:0px" width="460" height="26" viewBox="0 0 460 26"><g fill="none" stroke="#25508f" stroke-width="3"><circle cx="55" cy="3" r="16"/><path d="M46 -6 L57 5" stroke-width="3"/><path d="M46 -6 L46 2 M46 -6 L54 -6" /><path d="M22 23 H125 L150 6 H238 M245 5 H252 L278 23 H452 L466 9"/><circle cx="22" cy="23" r="2.5"/><circle cx="241" cy="5" r="3.5"/><path d="M206 -2 L255 26"/><path d="M265 -2 L292 26"/><circle cx="308" cy="-15" r="21"/><path d="M271 0 L290 13.5 H397 L411 0"/></g></svg>
<div class="b" style="left:0px;top:26px;width:1366px;height:92px;background:#f3f3f3"></div>
<div class="b" style="left:0px;top:118px;width:1366px;height:1px;background:#d4d4d4"></div>
<div class="b" style="left:61px;top:0px;width:58px;height:26px;background:#f3f3f3"></div>
<div class="t" style="left:20.00px;top:10.77px;font-size:12.2px;font-family:'Liberation Sans',sans-serif;color:#ffffff;transform:scaleX(0.9165);transform-origin:0 0;">File</div>
<div class="t" style="left:73.00px;top:10.77px;font-size:12.2px;font-family:'Liberation Sans',sans-serif;color:#2b579a;transform:scaleX(1.0149);transform-origin:0 0;">Home</div>
<div class="t" style="left:133.00px;top:10.77px;font-size:12.2px;font-family:'Liberation Sans',sans-serif;color:#ffffff;transform:scaleX(0.9349);transform-origin:0 0;">Insert</div>
<div class="t" style="left:189.00px;top:10.77px;font-size:12.2px;font-family:'Liberation Sans',sans-serif;color:#ffffff;transform:scaleX(0.9384);transform-origin:0 0;">Design</div>
<div class="t" style="left:252.00px;top:10.77px;font-size:12.2px;font-family:'Liberation Sans',sans-serif;color:#ffffff;transform:scaleX(0.9838);transform-origin:0 0;">Layout</div>
<div class="t" style="left:315.00px;top:10.77px;font-size:12.2px;font-family:'Liberation Sans',sans-serif;color:#ffffff;transform:scaleX(0.9145);transform-origin:0 0;">References</div>
<div class="t" style="left:399.00px;top:10.77px;font-size:12.2px;font-family:'Liberation Sans',sans-serif;color:#ffffff;transform:scaleX(1.0063);transform-origin:0 0;">Mailings</div>
<div class="t" style="left:471.00px;top:10.77px;font-size:12.2px;font-family:'Liberation Sans',sans-serif;color:#ffffff;transform:scaleX(0.9257);transform-origin:0 0;">Review</div>
<div class="t" style="left:535.00px;top:10.77px;font-size:12.2px;font-family:'Liberation Sans',sans-serif;color:#ffffff;transform:scaleX(0.9541);transform-origin:0 0;">View</div>
<div class="t" style="left:586.00px;top:10.77px;font-size:12.2px;font-family:'Liberation Sans',sans-serif;color:#ffffff;transform:scaleX(1.0168);transform-origin:0 0;">Help</div>
<svg style="left:641px;top:3px" width="14" height="17" viewBox="0 0 14 17"><g fill="none" stroke="#fff" stroke-width="1.1"><path d="M4.5 11.5 C4.5 9.5 1.8 8.3 1.8 5.6 A5.2 5.2 0 0 1 12.2 5.6 C12.2 8.3 9.5 9.5 9.5 11.5 Z"/><path d="M4.8 13.5 H9.2 M5.5 15.5 H8.5"/></g></svg>
<div class="t" style="left:667.50px;top:10.81px;font-size:12.1px;font-family:'Liberation Sans',sans-serif;color:#ffffff;transform:scaleX(1.0018);transform-origin:0 0;">Tell me what you want to do</div>
<svg style="left:1292px;top:2px" width="20" height="20" viewBox="0 0 20 20"><g fill="none" stroke="#fff" stroke-width="1.2"><circle cx="8" cy="6.5" r="4.5"/><path d="M1 18 C1.5 13 4 11.2 8 11.2 C9.5 11.2 10.5 11.5 11.5 12"/><path d="M14.5 12 V19 M11 15.5 H18"/></g></svg>
<div class="t" style="left:1312.00px;top:10.77px;font-size:12.2px;font-family:'Liberation Sans',sans-serif;color:#ffffff;transform:scaleX(0.9222);transform-origin:0 0;">Share</div>
<svg style="left:15px;top:32px" width="34" height="34" viewBox="0 0 34 34"><rect x="2" y="5" width="24" height="25" rx="1.5" fill="#ecc47c"/><path d="M7 5.5 H21 V9 H7 Z" fill="#6d6d6d"/><rect x="11.3" y="2" width="5.6" height="4" rx="1" fill="#6d6d6d"/><circle cx="14.1" cy="4" r="1" fill="#f3f3f3"/><path d="M16.6 13.6 H26.5 L30.6 17.7 V31.4 H16.6 Z" fill="#fff" stroke="#6d6d6d" stroke-width="1.1"/><path d="M26.3 13.6 V17.9 H30.6" fill="none" stroke="#6d6d6d" stroke-width="1"/></svg>
<div class="t" style="left:15.60px;top:75.22px;font-size:11.5px;font-family:'Liberation Sans',sans-serif;color:#262626;transform:scaleX(0.9347);transform-origin:0 0;">Paste</div>
<svg style="left:24.85px;top:87.8px" width="7.5" height="5" viewBox="0 0 7.5 5"><path d="M1 1 L6.5 1 L3.75 4 Z" fill="#6a6a6a"/></svg>
<svg style="left:52px;top:31px" width="18" height="18" viewBox="0 0 18 18"><path d="M4.5 1.5 L12.3 11 M13.5 1.5 L5.7 11" stroke="#6b6b6b" stroke-width="1.5" fill="none"/><circle cx="5" cy="13" r="2.6" fill="none" stroke="#3b78c3" stroke-width="1.3"/><circle cx="13" cy="13" r="2.6" fill="none" stroke="#3b78c3" stroke-width="1.3"/></svg>
<div class="t" style="left:72.20px;top:40.88px;font-size:11.9px;font-family:'Liberation Sans',sans-serif;color:#262626;transform:scaleX(0.9938);transform-origin:0 0;">Cut</div>
<svg style="left:52px;top:55px" width="18" height="17" viewBox="0 0 18 17"><path d="M1.5 1.5 H6.5 L8.5 3.5 V11.5 H1.5 Z" fill="#fff" stroke="#6b6b6b" stroke-width="1"/><path d="M3 4.5 H5.5 M3 7.5 H5.5" stroke="#3b78c3" stroke-width="1"/><path d="M7.5 3.5 H12.5 L15.5 6.5 V14.5 H7.5 Z" fill="#fff" stroke="#6b6b6b" stroke-width="1"/><path d="M9.5 8.5 H13.5 M9.5 11 H13.5 M9.5 13.5 H13.5" stroke="#3b78c3" stroke-width="0.9"/></svg>
<div class="t" style="left:72.20px;top:63.78px;font-size:11.9px;font-family:'Liberation Sans',sans-serif;color:#262626;transform:scaleX(0.9868);transform-origin:0 0;">Copy</div>
<svg style="left:52px;top:78px" width="18" height="16" viewBox="0 0 18 16"><path d="M10.5 7.5 L15.8 2.2" stroke="#6b6b6b" stroke-width="3.2" stroke-linecap="round"/><path d="M6.8 6.8 L11.2 11.2 L9.5 12.9 L5.1 8.5 Z" fill="#6b6b6b"/><path d="M1 9.5 L5.3 7.8 L10 12.5 L8 16 Z" fill="#ecc47c"/></svg>
<div class="t" style="left:72.20px;top:86.63px;font-size:11.75px;font-family:'Liberation Sans',sans-serif;color:#262626;transform:scaleX(1.0010);transform-origin:0 0;">Format Painter</div>
<div class="t" style="left:48.40px;top:109.75px;font-size:11.7px;font-family:'Liberation Sans',sans-serif;color:#262626;transform:scaleX(1.0014);transform-origin:0 0;">Clipboard</div>
<svg style="left:153px;top:106px" width="9" height="9" viewBox="0 0 9 9"><path d="M0.5 7 V0.5 H7" fill="none" stroke="#777" stroke-width="1"/><path d="M2.5 2.5 L7.5 7.5 M4 7.5 H7.5 V4" fill="none" stroke="#555" stroke-width="1"/></svg>
<div class="b" style="left:173px;top:37px;width:94px;height:23px;background:#fff;border:1px solid #ababab"></div>
<div class="b" style="left:266px;top:37px;width:44px;height:23px;background:#fff;border:1px solid #ababab"></div>
<div class="t" style="left:176.00px;top:48.31px;font-size:12.1px;font-family:'Liberation Sans',sans-serif;color:#262626;transform:scaleX(0.9511);transform-origin:0 0;">Times New Ro</div>
<svg style="left:256.1px;top:45.5px" width="7" height="5" viewBox="0 0 7 5"><path d="M1 1 L6 1 L3.5 4 Z" fill="#6a6a6a"/></svg>
<div class="t" style="left:271.00px;top:48.31px;font-size:12.1px;font-family:'Liberation Sans',sans-serif;color:#262626;">11</div>
<svg style="left:298.8px;top:45.5px" width="7" height="5" viewBox="0 0 7 5"><path d="M1 1 L6 1 L3.5 4 Z" fill="#6a6a6a"/></svg>
<div class="t" style="left:315.80px;top:49.10px;font-size:13px;font-family:'Liberation Sans',sans-serif;color:#555;font-weight:bold;transform:scaleX(1.0010);transform-origin:0 0;">A</div>
<svg style="left:323px;top:40px" width="8" height="5" viewBox="0 0 8 5"><path d="M0.5 4 L3.5 0.5 L6.5 4 Z" fill="#3b78c3"/></svg>
<div class="t" style="left:339.00px;top:50.27px;font-size:9.6px;font-family:'Liberation Sans',sans-serif;color:#555;font-weight:bold;transform:scaleX(1.0667);transform-origin:0 0;">A</div>
<svg style="left:345px;top:40px" width="8" height="5" viewBox="0 0 8 5"><path d="M0.5 0.5 H6.5 L3.5 4 Z" fill="#3b78c3"/></svg>
<div class="b" style="left:358px;top:38px;width:1px;height:21px;background:#d2d2d2"></div>
<div class="t" style="left:365.80px;top:47.63px;font-size:12.6px;font-family:'Liberation Sans',sans-serif;color:#555;font-weight:bold;transform:scaleX(0.9684);transform-origin:0 0;">Aa</div>
<svg style="left:385.0px;top:45.5px" width="7" height="5" viewBox="0 0 7 5"><path d="M1 1 L6 1 L3.5 4 Z" fill="#6a6a6a"/></svg>
<div class="b" style="left:400px;top:38px;width:1px;height:21px;background:#d2d2d2"></div>
<div class="t" style="left:409.00px;top:45.88px;font-size:9px;font-family:'Liberation Sans',sans-serif;color:#555;">A</div>
<svg style="left:409px;top:42px" width="17" height="15" viewBox="0 0 17 15"><path d="M9 1.5 L14.5 6.5 L8 13.5 L2.5 8.5 Z" fill="#e58b9b"/><path d="M2.5 8.5 L5 6 L10.5 11 L8 13.5 Z" fill="#f0b0bc"/></svg>
<div class="t" style="left:179.60px;top:79.44px;font-size:12px;font-family:'Liberation Sans',sans-serif;color:#555;font-weight:bold;transform:scaleX(0.8879);transform-origin:0 0;">B</div>
<svg style="left:200px;top:73px" width="11" height="11" viewBox="0 0 11 11"><path d="M4.6 1.3 H9.6 M2.2 9.7 H7.2 M7.1 1.3 L4.7 9.7" stroke="#555" stroke-width="1.5" fill="none"/></svg>
<div class="t" style="left:223.20px;top:79.24px;font-size:12px;font-family:'Liberation Sans',sans-serif;color:#555;font-weight:bold;transform:scaleX(0.9917);transform-origin:0 0;">U</div>
<div class="b" style="left:223px;top:84px;width:9px;height:1px;background:#555"></div>
<svg style="left:241.1px;top:77.3px" width="7" height="5" viewBox="0 0 7 5"><path d="M1 1 L6 1 L3.5 4 Z" fill="#6a6a6a"/></svg>
<div class="t" style="left:254.00px;top:79.59px;font-size:11px;font-family:'Liberation Sans',sans-serif;color:#555;font-weight:bold;transform:scaleX(0.8435);transform-origin:0 0;">abc</div>
<div class="b" style="left:254px;top:79px;width:17px;height:1px;background:#555"></div>
<div class="t" style="left:278.00px;top:79.07px;font-size:12.5px;font-family:'Liberation Sans',sans-serif;color:#555;font-weight:bold;">x</div>
<div class="t" style="left:286.50px;top:82.07px;font-size:7px;font-family:'Liberation Sans',sans-serif;color:#3b78c3;font-weight:bold;">2</div>
<div class="t" style="left:299.70px;top:79.07px;font-size:12.5px;font-family:'Liberation Sans',sans-serif;color:#555;font-weight:bold;">x</div>
<div class="t" style="left:308.00px;top:73.57px;font-size:7px;font-family:'Liberation Sans',sans-serif;color:#3b78c3;font-weight:bold;">2</div>
<div class="b" style="left:321px;top:69px;width:1px;height:21px;background:#d2d2d2"></div>
<svg style="left:329px;top:71px" width="16" height="15" viewBox="0 0 16 15"><path d="M1.5 13.5 L6.5 1 H8.5 L13.5 13.5 H10.8 L9.6 10.2 H5.4 L4.2 13.5 Z M6.2 8 H8.8 L7.5 4.3 Z" fill="#fff" stroke="#3b78c3" stroke-width="1.3" stroke-linejoin="round"/></svg>
<svg style="left:348.0px;top:76.5px" width="7" height="5" viewBox="0 0 7 5"><path d="M1 1 L6 1 L3.5 4 Z" fill="#6a6a6a"/></svg>
<div class="t" style="left:361.50px;top:76.21px;font-size:9.5px;font-family:'Liberation Sans',sans-serif;color:#555;">ab</div>
<svg style="left:366px;top:71px" width="14" height="13" viewBox="0 0 14 13"><path d="M12.5 1.5 L4 10 L2.5 12" stroke="#6b6b6b" stroke-width="2.2" fill="none"/></svg>
<div class="b" style="left:362px;top:83px;width:16px;height:4px;background:#ffff00"></div>
<svg style="left:383.0px;top:76.5px" width="7" height="5" viewBox="0 0 7 5"><path d="M1 1 L6 1 L3.5 4 Z" fill="#6a6a6a"/></svg>
<div class="t" style="left:399.60px;top:78.62px;font-size:13.5px;font-family:'Liberation Sans',sans-serif;color:#555;font-weight:bold;transform:scaleX(0.9846);transform-origin:0 0;">A</div>
<div class="b" style="left:396px;top:83px;width:16px;height:4px;background:#ff0000"></div>
<svg style="left:416.5px;top:76.5px" width="7" height="5" viewBox="0 0 7 5"><path d="M1 1 L6 1 L3.5 4 Z" fill="#6a6a6a"/></svg>
<div class="t" style="left:279.50px;top:109.75px;font-size:11.7px;font-family:'Liberation Sans',sans-serif;color:#262626;transform:scaleX(0.9876);transform-origin:0 0;">Font</div>
<svg style="left:423px;top:106px" width="9" height="9" viewBox="0 0 9 9"><path d="M0.5 7 V0.5 H7" fill="none" stroke="#777" stroke-width="1"/><path d="M2.5 2.5 L7.5 7.5 M4 7.5 H7.5 V4" fill="none" stroke="#555" stroke-width="1"/></svg>
<svg style="left:445px;top:38px" width="18" height="18" viewBox="0 0 18 18"><circle cx="3.3" cy="3.5" r="1.4" fill="#3b78c3"/><path d="M7 3.5 H15" stroke="#6b6b6b" stroke-width="1.1"/><circle cx="3.3" cy="9.5" r="1.4" fill="#3b78c3"/><path d="M7 9.5 H15" stroke="#6b6b6b" stroke-width="1.1"/><circle cx="3.3" cy="15.5" r="1.4" fill="#3b78c3"/><path d="M7 15.5 H15" stroke="#6b6b6b" stroke-width="1.1"/></svg>
<svg style="left:466.8px;top:45.5px" width="7" height="5" viewBox="0 0 7 5"><path d="M1 1 L6 1 L3.5 4 Z" fill="#6a6a6a"/></svg>
<svg style="left:479px;top:38px" width="18" height="18" viewBox="0 0 18 18"><text x="1.5" y="6" font-size="6" font-family="Liberation Sans" font-weight="bold" fill="#3b78c3">1</text><path d="M7 3.5 H16" stroke="#6b6b6b" stroke-width="1.1"/><text x="1.5" y="12" font-size="6" font-family="Liberation Sans" font-weight="bold" fill="#3b78c3">2</text><path d="M7 9.5 H16" stroke="#6b6b6b" stroke-width="1.1"/><text x="1.5" y="18" font-size="6" font-family="Liberation Sans" font-weight="bold" fill="#3b78c3">3</text><path d="M7 15.5 H16" stroke="#6b6b6b" stroke-width="1.1"/></svg>
<svg style="left:500.7px;top:45.5px" width="7" height="5" viewBox="0 0 7 5"><path d="M1 1 L6 1 L3.5 4 Z" fill="#6a6a6a"/></svg>
<svg style="left:512px;top:38px" width="20" height="18" viewBox="0 0 20 18"><text x="1" y="5.5" font-size="5" font-family="Liberation Sans" font-weight="bold" fill="#3b78c3">1</text><path d="M6.5 3 H17" stroke="#6b6b6b" stroke-width="1.1"/><text x="4" y="11.5" font-size="5" font-family="Liberation Sans" font-weight="bold" fill="#3b78c3">a</text><path d="M9.5 9 H17" stroke="#6b6b6b" stroke-width="1.1"/><text x="8" y="17" font-size="5" font-family="Liberation Sans" font-weight="bold" fill="#3b78c3">i</text><path d="M11.5 15 H14.5" stroke="#6b6b6b" stroke-width="1.1"/></svg>
<svg style="left:533.2px;top:45.5px" width="7" height="5" viewBox="0 0 7 5"><path d="M1 1 L6 1 L3.5 4 Z" fill="#6a6a6a"/></svg>
<div class="b" style="left:548px;top:38px;width:1px;height:21px;background:#d2d2d2"></div>
<svg style="left:555px;top:39px" width="18" height="17" viewBox="0 0 18 17"><path d="M1.5 1.5 H16 M7.5 5.5 H16 M7.5 9.5 H16 M1.5 13.5 H16" stroke="#6b6b6b" stroke-width="1.1"/><path d="M1.5 7.5 H6.5 M1.5 7.5 L3.8 5.2 M1.5 7.5 L3.8 9.8" stroke="#3b78c3" stroke-width="1.5" fill="none"/></svg>
<svg style="left:577px;top:39px" width="18" height="17" viewBox="0 0 18 17"><path d="M1.5 1.5 H16 M8.5 5.5 H16 M8.5 9.5 H16 M1.5 13.5 H16" stroke="#6b6b6b" stroke-width="1.1"/><path d="M1.5 7.5 H6.5 M6.5 7.5 L4.2 5.2 M6.5 7.5 L4.2 9.8" stroke="#3b78c3" stroke-width="1.5" fill="none"/></svg>
<div class="b" style="left:601px;top:38px;width:1px;height:21px;background:#d2d2d2"></div>
<svg style="left:609px;top:39px" width="17" height="18" viewBox="0 0 17 18"><text x="0.5" y="7.5" font-size="7.5" font-family="Liberation Sans" fill="#3b78c3">A</text><text x="0.8" y="15.8" font-size="7.5" font-family="Liberation Sans" fill="#9c4fc1">Z</text><path d="M11.5 1 V15 M8.5 12 L11.5 15.5 L14.5 12" stroke="#6b6b6b" stroke-width="1.2" fill="none"/></svg>
<div class="b" style="left:632px;top:38px;width:1px;height:21px;background:#d2d2d2"></div>
<div class="t" style="left:641.50px;top:48.45px;font-size:14px;font-family:'Liberation Sans',sans-serif;color:#666;font-weight:bold;">¶</div>
<div class="b" style="left:443px;top:68px;width:22px;height:23px;background:#c5c5c5;border:1px solid #9c9c9c"></div>
<svg style="left:446px;top:74px" width="16" height="16" viewBox="0 0 16 16"><path d="M1 1.5 H14.5" stroke="#6b6b6b" stroke-width="1"/><path d="M1 4.5 H10" stroke="#6b6b6b" stroke-width="1"/><path d="M1 7.5 H14.5" stroke="#6b6b6b" stroke-width="1"/><path d="M1 10.5 H10" stroke="#6b6b6b" stroke-width="1"/></svg>
<svg style="left:468px;top:74px" width="16" height="16" viewBox="0 0 16 16"><path d="M1 1.5 H15" stroke="#6b6b6b" stroke-width="1"/><path d="M3.5 4.5 H12.5" stroke="#6b6b6b" stroke-width="1"/><path d="M1 7.5 H15" stroke="#6b6b6b" stroke-width="1"/><path d="M3.5 10.5 H12.5" stroke="#6b6b6b" stroke-width="1"/></svg>
<svg style="left:490px;top:74px" width="16" height="16" viewBox="0 0 16 16"><path d="M1 1.5 H15" stroke="#6b6b6b" stroke-width="1"/><path d="M5 4.5 H15" stroke="#6b6b6b" stroke-width="1"/><path d="M1 7.5 H15" stroke="#6b6b6b" stroke-width="1"/><path d="M5 10.5 H15" stroke="#6b6b6b" stroke-width="1"/></svg>
<svg style="left:512px;top:74px" width="16" height="16" viewBox="0 0 16 16"><path d="M1 1.5 H15" stroke="#6b6b6b" stroke-width="1"/><path d="M1 4.5 H15" stroke="#6b6b6b" stroke-width="1"/><path d="M1 7.5 H15" stroke="#6b6b6b" stroke-width="1"/><path d="M1 10.5 H15" stroke="#6b6b6b" stroke-width="1"/></svg>
<div class="b" style="left:535px;top:69px;width:1px;height:21px;background:#d2d2d2"></div>
<svg style="left:542px;top:70px" width="18" height="18" viewBox="0 0 18 18"><path d="M3 1.5 V15.5 M0.5 4 L3 1.2 L5.5 4 M0.5 13 L3 15.8 L5.5 13" stroke="#3b78c3" stroke-width="1.2" fill="none"/><path d="M8 3 H16 M8 6.5 H16 M8 10 H16 M8 13.5 H16" stroke="#6b6b6b" stroke-width="1.1"/></svg>
<svg style="left:562.0px;top:76.5px" width="7" height="5" viewBox="0 0 7 5"><path d="M1 1 L6 1 L3.5 4 Z" fill="#6a6a6a"/></svg>
<div class="b" style="left:577px;top:69px;width:1px;height:21px;background:#d2d2d2"></div>
<svg style="left:584px;top:70px" width="18" height="18" viewBox="0 0 18 18"><path d="M3.5 7 L9 1.5 L14.5 7 L9 12.5 Z" fill="#fff" stroke="#6b6b6b" stroke-width="1.1" stroke-linejoin="round"/><path d="M7 4 V1.2 Q7 0.4 8 0.4 H9.5 Q10.5 0.4 10.5 1.5 L9.5 3 M9 1.5 V5.5" stroke="#6b6b6b" stroke-width="1" fill="none"/><path d="M15 5.5 Q17.5 7 16 11.5 L14.8 12.5 Z" fill="#3b78c3"/><rect x="1.5" y="13.3" width="15" height="3.3" fill="#fff" stroke="#6b6b6b" stroke-width="1"/></svg>
<svg style="left:606.0px;top:76.5px" width="7" height="5" viewBox="0 0 7 5"><path d="M1 1 L6 1 L3.5 4 Z" fill="#6a6a6a"/></svg>
<svg style="left:620px;top:72px" width="14" height="14" viewBox="0 0 14 14"><rect x="0" y="0" width="1.2" height="1.2" fill="#6b6b6b"/><rect x="2" y="0" width="1.2" height="1.2" fill="#6b6b6b"/><rect x="4" y="0" width="1.2" height="1.2" fill="#6b6b6b"/><rect x="6" y="0" width="1.2" height="1.2" fill="#6b6b6b"/><rect x="8" y="0" width="1.2" height="1.2" fill="#6b6b6b"/><rect x="10" y="0" width="1.2" height="1.2" fill="#6b6b6b"/><rect x="12" y="0" width="1.2" height="1.2" fill="#6b6b6b"/><rect x="0" y="2" width="1.2" height="1.2" fill="#6b6b6b"/><rect x="6" y="2" width="1.2" height="1.2" fill="#6b6b6b"/><rect x="12" y="2" width="1.2" height="1.2" fill="#6b6b6b"/><rect x="0" y="4" width="1.2" height="1.2" fill="#6b6b6b"/><rect x="6" y="4" width="1.2" height="1.2" fill="#6b6b6b"/><rect x="12" y="4" width="1.2" height="1.2" fill="#6b6b6b"/><rect x="0" y="6" width="1.2" height="1.2" fill="#6b6b6b"/><rect x="2" y="6" width="1.2" height="1.2" fill="#6b6b6b"/><rect x="4" y="6" width="1.2" height="1.2" fill="#6b6b6b"/><rect x="6" y="6" width="1.2" height="1.2" fill="#6b6b6b"/><rect x="8" y="6" width="1.2" height="1.2" fill="#6b6b6b"/><rect x="10" y="6" width="1.2" height="1.2" fill="#6b6b6b"/><rect x="12" y="6" width="1.2" height="1.2" fill="#6b6b6b"/><rect x="0" y="8" width="1.2" height="1.2" fill="#6b6b6b"/><rect x="6" y="8" width="1.2" height="1.2" fill="#6b6b6b"/><rect x="12" y="8" width="1.2" height="1.2" fill="#6b6b6b"/><rect x="0" y="10" width="1.2" height="1.2" fill="#6b6b6b"/><rect x="6" y="10" width="1.2" height="1.2" fill="#6b6b6b"/><rect x="12" y="10" width="1.2" height="1.2" fill="#6b6b6b"/><rect x="0" y="12" width="13.2" height="1.2" fill="#6b6b6b"/></svg>
<svg style="left:639.8px;top:76.5px" width="7" height="5" viewBox="0 0 7 5"><path d="M1 1 L6 1 L3.5 4 Z" fill="#6a6a6a"/></svg>
<div class="t" style="left:516.40px;top:109.75px;font-size:11.7px;font-family:'Liberation Sans',sans-serif;color:#262626;transform:scaleX(0.9562);transform-origin:0 0;">Paragraph</div>
<svg style="left:655px;top:106px" width="9" height="9" viewBox="0 0 9 9"><path d="M0.5 7 V0.5 H7" fill="none" stroke="#777" stroke-width="1"/><path d="M2.5 2.5 L7.5 7.5 M4 7.5 H7.5 V4" fill="none" stroke="#555" stroke-width="1"/></svg>
<div class="b" style="left:676px;top:32px;width:521px;height:60px;background:#fff;border:1px solid #d5d5d5"></div>
<div class="b" style="left:677px;top:34px;width:72px;height:56px;background:#fff;border:3px solid #c6c6c6"></div>
<div class="b" style="left:683px;top:40px;width:59px;height:24px;overflow:hidden"><div class="t" style="left:0.80px;top:14.64px;font-size:12px;font-family:'Liberation Sans',sans-serif;color:#000;transform:scaleX(1.0224);transform-origin:0 0;">AaBbCcDc</div>
</div><div class="t" style="left:688.80px;top:78.95px;font-size:11.7px;font-family:'Liberation Sans',sans-serif;color:#444;transform:scaleX(1.0084);transform-origin:0 0;">¶ Normal</div>
<div class="b" style="left:755px;top:40px;width:60px;height:24px;overflow:hidden"><div class="t" style="left:0.80px;top:14.64px;font-size:12px;font-family:'Liberation Sans',sans-serif;color:#000;transform:scaleX(1.0224);transform-origin:0 0;">AaBbCcDc</div>
</div><div class="t" style="left:754.00px;top:78.95px;font-size:11.7px;font-family:'Liberation Sans',sans-serif;color:#444;transform:scaleX(0.9580);transform-origin:0 0;">¶ No Spac...</div>
<div class="b" style="left:827px;top:40px;width:59px;height:26px;overflow:hidden"><div class="t" style="left:0.70px;top:15.16px;font-size:18px;font-family:'Liberation Sans',sans-serif;color:#4472c4;transform:scaleX(0.9463);transform-origin:0 0;">AaBbCc</div>
</div><div class="t" style="left:830.00px;top:78.95px;font-size:11.7px;font-family:'Liberation Sans',sans-serif;color:#444;transform:scaleX(1.0094);transform-origin:0 0;">Heading 1</div>
<div class="b" style="left:899px;top:40px;width:59.5px;height:26px;overflow:hidden"><div class="t" style="left:0.70px;top:13.53px;font-size:15.8px;font-family:'Liberation Sans',sans-serif;color:#4472c4;transform:scaleX(0.8795);transform-origin:0 0;">AaBbCcD</div>
</div><div class="t" style="left:902.30px;top:78.95px;font-size:11.7px;font-family:'Liberation Sans',sans-serif;color:#444;transform:scaleX(1.0132);transform-origin:0 0;">Heading 2</div>
<div class="b" style="left:971px;top:41px;width:58px;height:24px;overflow:hidden"><div class="t" style="left:1.20px;top:9.55px;font-size:29px;font-family:'Liberation Sans',sans-serif;color:#1a1a1a;transform:scaleX(0.9995);transform-origin:0 0;">AaB</div>
</div><div class="t" style="left:990.70px;top:78.95px;font-size:11.7px;font-family:'Liberation Sans',sans-serif;color:#444;transform:scaleX(0.9835);transform-origin:0 0;">Title</div>
<div class="b" style="left:1043px;top:40px;width:59px;height:26px;overflow:hidden"><div class="t" style="left:0.50px;top:14.78px;font-size:11.6px;font-family:'Liberation Sans',sans-serif;color:#5a5a5a;letter-spacing:0.9px;">AaBbCcD</div>
</div><div class="t" style="left:1052.90px;top:78.95px;font-size:11.7px;font-family:'Liberation Sans',sans-serif;color:#444;transform:scaleX(1.0286);transform-origin:0 0;">Subtitle</div>
<div class="b" style="left:1115px;top:40px;width:59px;height:26px;overflow:hidden"><div class="t" style="left:0.50px;top:14.78px;font-size:11.6px;font-family:'Liberation Sans',sans-serif;color:#404040;font-style:italic;">AaBbCcDc</div>
</div><div class="t" style="left:1113.70px;top:78.95px;font-size:11.7px;font-family:'Liberation Sans',sans-serif;color:#444;transform:scaleX(0.9627);transform-origin:0 0;">Subtle Em...</div>
<div class="b" style="left:1182px;top:32px;width:15px;height:60px;background:#fff;border:1px solid #d5d5d5"></div>
<div class="b" style="left:1183px;top:33px;width:13px;height:20px;background:#e3e3e3"></div>
<div class="b" style="left:1182px;top:53px;width:15px;height:1px;background:#d5d5d5"></div>
<div class="b" style="left:1182px;top:72px;width:15px;height:1px;background:#d5d5d5"></div>
<svg style="left:1186px;top:41px" width="8" height="5" viewBox="0 0 8 5"><path d="M0.5 4 L3.5 0.8 L6.5 4 Z" fill="#c2c2c2"/></svg>
<svg style="left:1185.5px;top:60.699999999999996px" width="8" height="5.2" viewBox="0 0 8 5.2"><path d="M1 1 L7 1 L4.0 4.2 Z" fill="#6a6a6a"/></svg>
<div class="b" style="left:1186px;top:79px;width:7px;height:1px;background:#6a6a6a"></div>
<svg style="left:1185.5px;top:80.4px" width="8" height="5.2" viewBox="0 0 8 5.2"><path d="M1 1 L7 1 L4.0 4.2 Z" fill="#6a6a6a"/></svg>
<div class="t" style="left:914.50px;top:109.75px;font-size:11.7px;font-family:'Liberation Sans',sans-serif;color:#262626;transform:scaleX(0.8797);transform-origin:0 0;">Styles</div>
<svg style="left:1196px;top:106px" width="9" height="9" viewBox="0 0 9 9"><path d="M0.5 7 V0.5 H7" fill="none" stroke="#777" stroke-width="1"/><path d="M2.5 2.5 L7.5 7.5 M4 7.5 H7.5 V4" fill="none" stroke="#555" stroke-width="1"/></svg>
<svg style="left:1218px;top:33px" width="16" height="15" viewBox="0 0 16 15"><circle cx="10" cy="5.5" r="4" fill="none" stroke="#3b78c3" stroke-width="1.6"/><path d="M7 8.5 L2.2 13.3" stroke="#3b78c3" stroke-width="2.3" stroke-linecap="round"/></svg>
<div class="t" style="left:1238.50px;top:40.68px;font-size:11.9px;font-family:'Liberation Sans',sans-serif;color:#262626;transform:scaleX(0.9161);transform-origin:0 0;">Find</div>
<svg style="left:1270.2px;top:38.0px" width="7" height="5" viewBox="0 0 7 5"><path d="M1 1 L6 1 L3.5 4 Z" fill="#6a6a6a"/></svg>
<div class="t" style="left:1218.80px;top:58.83px;font-size:10px;font-family:'Liberation Sans',sans-serif;color:#555;font-weight:bold;">a</div>
<div class="t" style="left:1224.80px;top:58.83px;font-size:10px;font-family:'Liberation Sans',sans-serif;color:#9a4fc0;font-weight:bold;">b</div>
<div class="t" style="left:1224.00px;top:66.33px;font-size:10px;font-family:'Liberation Sans',sans-serif;color:#555;font-weight:bold;">a</div>
<div class="t" style="left:1229.60px;top:66.33px;font-size:10px;font-family:'Liberation Sans',sans-serif;color:#3b78c3;font-weight:bold;">c</div>
<svg style="left:1218px;top:63px" width="6" height="7" viewBox="0 0 6 7"><path d="M4.5 0.5 L1 4 H5 M1 4 L3 2" stroke="#3b78c3" stroke-width="1" fill="none"/></svg>
<div class="t" style="left:1238.50px;top:63.08px;font-size:11.9px;font-family:'Liberation Sans',sans-serif;color:#262626;transform:scaleX(0.9395);transform-origin:0 0;">Replace</div>
<svg style="left:1222px;top:77px" width="12" height="17" viewBox="0 0 12 17"><path d="M1 1 V13 L4 10.3 L6.3 15.5 L8.5 14.5 L6.2 9.5 H10.3 Z" fill="#fff" stroke="#6b6b6b" stroke-width="1" stroke-linejoin="round"/></svg>
<div class="t" style="left:1238.50px;top:86.28px;font-size:11.9px;font-family:'Liberation Sans',sans-serif;color:#262626;transform:scaleX(0.9558);transform-origin:0 0;">Select</div>
<svg style="left:1270.7px;top:83.5px" width="7" height="5" viewBox="0 0 7 5"><path d="M1 1 L6 1 L3.5 4 Z" fill="#6a6a6a"/></svg>
<div class="t" style="left:1232.30px;top:109.75px;font-size:11.7px;font-family:'Liberation Sans',sans-serif;color:#262626;transform:scaleX(1.0042);transform-origin:0 0;">Editing</div>
<svg style="left:1346px;top:108px" width="13" height="7" viewBox="0 0 13 7"><path d="M1 6 L6.5 1 L12 6" stroke="#444" stroke-width="0.9" fill="none"/></svg>
<div class="b" style="left:164px;top:30px;width:1px;height:84px;background:#c6c6c6"></div>
<div class="b" style="left:434px;top:30px;width:1px;height:84px;background:#c6c6c6"></div>
<div class="b" style="left:667px;top:30px;width:1px;height:84px;background:#c6c6c6"></div>
<div class="b" style="left:1207px;top:30px;width:1px;height:84px;background:#c6c6c6"></div>
<div class="b" style="left:1293px;top:30px;width:1px;height:84px;background:#c6c6c6"></div>
<div class="b" style="left:0px;top:668px;width:1366px;height:19px;background:#f3f3f3;border-top:1px solid #d2d2d2"></div>
<div class="t" style="left:8.00px;top:679.12px;font-size:11.2px;font-family:'Liberation Sans',sans-serif;color:#444;transform:scaleX(0.9992);transform-origin:0 0;">Page 4 of 19</div>
<div class="t" style="left:89.70px;top:679.12px;font-size:11.2px;font-family:'Liberation Sans',sans-serif;color:#444;transform:scaleX(1.0228);transform-origin:0 0;">73 of 3163 words</div>
<div class="t" style="left:197.70px;top:679.12px;font-size:11.2px;font-family:'Liberation Sans',sans-serif;color:#444;transform:scaleX(1.0642);transform-origin:0 0;">Mongolian (Mongolia)</div>
<div class="t" style="left:1331.60px;top:679.12px;font-size:11.2px;font-family:'Liberation Sans',sans-serif;color:#444;transform:scaleX(0.8971);transform-origin:0 0;">50%</div>
<svg style="left:1078px;top:671px" width="16" height="15" viewBox="0 0 16 15"><path d="M1 1.5 H6 Q7.5 1.5 7.5 3 V13 Q7.5 12 6 12 H1 Z M14 1.5 H9 Q7.5 1.5 7.5 3 V13 Q7.5 12 9 12 H14 Z" fill="#fff" stroke="#6a6a6a" stroke-width="1"/><path d="M2.5 4 H6 M2.5 6 H6 M2.5 8 H6 M9 4 H12.5 M9 6 H12.5 M9 8 H12.5" stroke="#6a6a6a" stroke-width="0.8"/><path d="M7.5 13 V14.5" stroke="#6a6a6a"/></svg>
<div class="b" style="left:1106px;top:669px;width:40px;height:18px;background:#c8c8c8"></div>
<svg style="left:1118px;top:671px" width="16" height="15" viewBox="0 0 16 15"><rect x="1.5" y="1.5" width="13" height="12" fill="#fff" stroke="#6a6a6a" stroke-width="1"/><path d="M3.5 4 H12.5 M3.5 6.3 H12.5 M3.5 8.6 H12.5 M3.5 10.9 H12.5" stroke="#6a6a6a" stroke-width="0.9"/></svg>
<svg style="left:1158px;top:671px" width="17" height="16" viewBox="0 0 17 16"><path d="M1.5 1.5 H11 V7 M1.5 1.5 V12.5 H7" fill="#fff" stroke="#6a6a6a" stroke-width="1"/><path d="M3.5 4 H9.5 M3.5 6.3 H9.5 M3.5 8.6 H7" stroke="#6a6a6a" stroke-width="0.9"/><circle cx="11.5" cy="11.5" r="3.6" fill="#fff" stroke="#6a6a6a" stroke-width="1"/><path d="M9 10 Q11 11 11.5 13.5 M12 8.5 Q13 10.5 14.5 10.5" stroke="#6a6a6a" stroke-width="0.8" fill="none"/></svg>
<div class="b" style="left:1192px;top:678px;width:8px;height:1px;background:#555"></div>
<div class="b" style="left:1205px;top:678px;width:100px;height:1px;background:#a8a8a8"></div>
<div class="b" style="left:1255px;top:675px;width:1px;height:7px;background:#a8a8a8"></div>
<div class="b" style="left:1227px;top:674px;width:5px;height:11px;background:#5a5a5a"></div>
<div class="b" style="left:1310px;top:678px;width:8px;height:1px;background:#555"></div>
<div class="b" style="left:1313px;top:674px;width:1px;height:9px;background:#555"></div>
<div class="b" style="left:1350px;top:136px;width:15px;height:516px;background:#dadada"></div>
<div class="b" style="left:1350px;top:121px;width:15px;height:15px;background:#fff;border:1px solid #b8b8b8"></div>
<svg style="left:1353px;top:125px" width="9" height="6" viewBox="0 0 9 6"><path d="M0.5 5 L4.5 0.8 L8.5 5 Z" fill="#6a6a6a"/></svg>
<div class="b" style="left:1350px;top:210px;width:15px;height:75px;background:#fff;border:1px solid #a9a9a9"></div>
<div class="b" style="left:1350px;top:652px;width:15px;height:15px;background:#fff;border:1px solid #b8b8b8"></div>
<svg style="left:1353px;top:657px" width="9" height="6" viewBox="0 0 9 6"><path d="M0.5 0.8 L8.5 0.8 L4.5 5 Z" fill="#6a6a6a"/></svg>
</body></html>
